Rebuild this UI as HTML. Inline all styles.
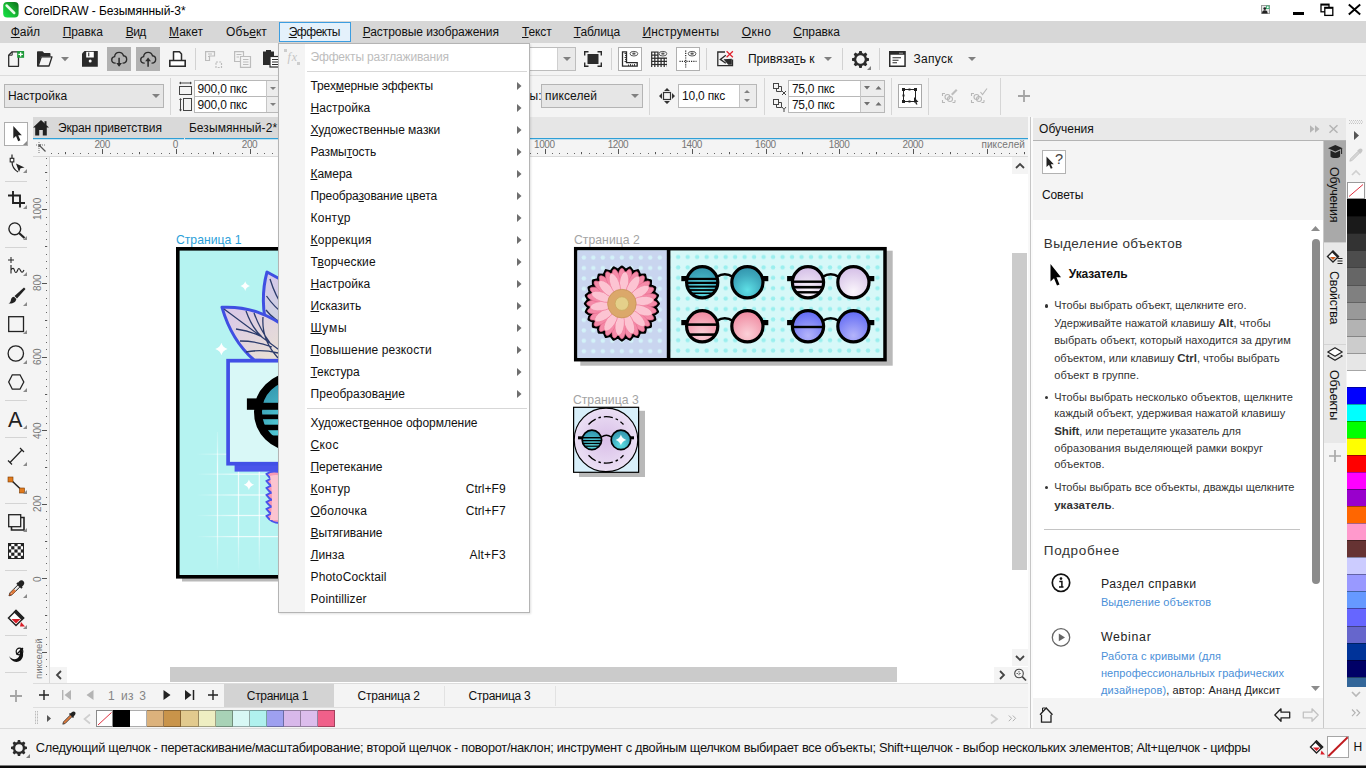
<!DOCTYPE html>
<html lang="ru">
<head>
<meta charset="utf-8">
<title>CorelDRAW - Безымянный-3*</title>
<style>
*{box-sizing:border-box;margin:0;padding:0}
html,body{width:1366px;height:768px;overflow:hidden;background:#f4f4f4}
body{position:relative;font-family:"Liberation Sans",sans-serif;font-size:12.5px;color:#111;line-height:1}
.a{position:absolute}
.t{position:absolute;white-space:nowrap;line-height:16px;height:16px}
u{text-decoration:underline;text-underline-offset:.5px;text-decoration-thickness:1px}
svg{position:absolute;overflow:visible}
.vr{font-size:10px;color:#767676;line-height:10px;height:10px;white-space:nowrap;transform-origin:0 0;transform:rotate(-90deg);text-align:left}
.vt{font-size:12.5px;color:#111;line-height:12px;height:12px;white-space:nowrap;transform-origin:0 0;transform:rotate(90deg)}
b{font-weight:bold}
</style>
</head>
<body>
<div class="a " style="left:0px;top:0px;width:1366px;height:21px;background:#ffffff;"></div>
<svg class="a" style="left:3px;top:2.3px;" width="16" height="16" viewBox="0 0 16 16"><defs><linearGradient id="lg1" x1="1" y1="0" x2="0" y2="1"><stop offset="0" stop-color="#0a6a1a"/><stop offset=".45" stop-color="#17b030"/><stop offset="1" stop-color="#12e646"/></linearGradient></defs>
<rect x=".200" y="0" width="15.400" height="15.600" rx="4" fill="url(#lg1)"/>
<path d="M3.600 3.500L11.200 11" stroke="#e4fbe6" stroke-width="2.500" stroke-linecap="round"/></svg>
<span class="t" id="t0" style="left:23.90px;top:3.00px;font-size:12px;color:#000;letter-spacing:-0.039px;">CorelDRAW - Безымянный-3*</span>
<svg class="a" style="left:1261px;top:5px;" width="9" height="9" viewBox="0 0 9 9"><rect x="0.5" y="0.5" width="8" height="8" fill="#e8e8e8" stroke="#9a9a9a" stroke-width="1"/><circle cx="3.8" cy="3.6" r="1.4" fill="#222"/><path d="M1 8.5 Q1 5.2 3.8 5.2 Q6.6 5.2 6.6 8.5Z" fill="#222"/><rect x="5.4" y="1" width="2.6" height="2.6" fill="#fff" stroke="#2fae6c" stroke-width=".8"/></svg>
<div class="a " style="left:1293px;top:12px;width:11px;height:3px;background:#000;"></div>
<svg class="a" style="left:1320px;top:3px;" width="14" height="13" viewBox="0 0 14 13"><rect x="1" y="1.2" width="8" height="7.6" fill="#fff" stroke="#000" stroke-width="1.3"/><rect x="1" y="1" width="8" height="1.6" fill="#000"/><rect x="4.8" y="4.4" width="8" height="8" fill="#fff" stroke="#000" stroke-width="1.3"/><rect x="4.8" y="4.2" width="8" height="1.6" fill="#000"/></svg>
<svg class="a" style="left:1348px;top:4px;" width="13" height="11" viewBox="0 0 13 11"><path d="M0.8 0.5 L12.2 10.5 M12.2 0.5 L0.8 10.5" stroke="#000" stroke-width="1.9" fill="none"/></svg>
<div class="a " style="left:0px;top:21px;width:1366px;height:22px;background:#d7d7d7;"></div>
<div class="a " style="left:279px;top:22px;width:72px;height:20px;background:#e4f1fb;border:1px solid #3c9de0;"></div>
<span class="t" id="t1" style="left:10.80px;top:24.00px;font-size:12px;color:#111;letter-spacing:-0.072px;"><u>Ф</u>айл</span>
<span class="t" id="t2" style="left:62.70px;top:24.00px;font-size:12px;color:#111;letter-spacing:-0.069px;"><u>П</u>равка</span>
<span class="t" id="t3" style="left:125.70px;top:24.00px;font-size:12px;color:#111;letter-spacing:-0.517px;"><u>В</u>ид</span>
<span class="t" id="t4" style="left:169.00px;top:24.00px;font-size:12px;color:#111;letter-spacing:0.029px;"><u>М</u>акет</span>
<span class="t" id="t5" style="left:226.10px;top:24.00px;font-size:12px;color:#111;letter-spacing:-0.038px;">Объ<u>е</u>кт</span>
<span class="t" id="t6" style="left:288.70px;top:24.00px;font-size:12px;color:#111;letter-spacing:-0.477px;"><u>Э</u>ффекты</span>
<span class="t" id="t7" style="left:362.70px;top:24.00px;font-size:12px;color:#111;letter-spacing:-0.067px;"><u>Р</u>астровые изображения</span>
<span class="t" id="t8" style="left:522.00px;top:24.00px;font-size:12px;color:#111;letter-spacing:-0.130px;"><u>Т</u>екст</span>
<span class="t" id="t9" style="left:573.70px;top:24.00px;font-size:12px;color:#111;letter-spacing:-0.077px;"><u>Т</u>аблица</span>
<span class="t" id="t10" style="left:642.40px;top:24.00px;font-size:12px;color:#111;letter-spacing:0.197px;"><u>И</u>нструменты</span>
<span class="t" id="t11" style="left:741.70px;top:24.00px;font-size:12px;color:#111;letter-spacing:0.465px;"><u>О</u>кно</span>
<span class="t" id="t12" style="left:793.30px;top:24.00px;font-size:12px;color:#111;letter-spacing:-0.066px;"><u>С</u>правка</span>
<div class="a " style="left:0px;top:43px;width:1366px;height:32px;background:#f4f4f4;"></div>
<div class="a " style="left:0px;top:75px;width:1366px;height:1px;background:#dcdcdc;"></div>
<div class="a " style="left:0px;top:76px;width:1366px;height:40px;background:#f4f4f4;"></div>
<div class="a " style="left:4px;top:84px;width:160px;height:24px;background:#e6e6e6;border:1px solid #b4b4b4;"></div>
<span class="t" id="t13" style="left:7.90px;top:88.00px;font-size:12px;color:#111;letter-spacing:0.028px;">Настройка</span>
<svg class="a" style="left:152px;top:94px;" width="8" height="4" viewBox="0 0 8 4"><path d="M0 0H8L4 4Z" fill="#808080"/></svg>
<div class="a " style="left:170px;top:78px;width:1px;height:37px;background:#d6d6d6;"></div>
<div class="a " style="left:194px;top:80px;width:99px;height:17px;background:#fff;border:1px solid #b8b8b8;"></div>
<div class="a " style="left:194px;top:96px;width:99px;height:17px;background:#fff;border:1px solid #b8b8b8;"></div>
<div class="a " style="left:266px;top:81px;width:26px;height:15px;background:#ececec;"></div>
<div class="a " style="left:266px;top:97px;width:26px;height:15px;background:#ececec;"></div>
<svg class="a" style="left:270px;top:87px;" width="6" height="3" viewBox="0 0 6 3"><path d="M0 0H6L3 3Z" fill="#808080"/></svg>
<svg class="a" style="left:270px;top:103px;" width="6" height="3" viewBox="0 0 6 3"><path d="M0 0H6L3 3Z" fill="#808080"/></svg>
<span class="t" id="t14" style="left:197.60px;top:81.00px;font-size:12px;color:#111;letter-spacing:-0.206px;">900,0 пкс</span>
<span class="t" id="t15" style="left:197.60px;top:97.00px;font-size:12px;color:#111;letter-spacing:-0.206px;">900,0 пкс</span>
<svg class="a" style="left:179px;top:81px;" width="14" height="33" viewBox="0 0 14 33"><g fill="none" stroke="#444" stroke-width="1"><rect x=".5" y="5.5" width="12" height="8"/><path d="M1 2H12"/><rect x="4.5" y="17.5" width="8" height="12"/><path d="M1.5 18.5V29"/></g>
<path d="M0 2l2-1.6v3.2zM13 2l-2-1.6v3.2zM1.5 17l-1.5 2h3zM1.5 30.5l-1.5-2h3z" fill="#444"/></svg>
<span class="t" id="t16" style="left:529.60px;top:88.00px;font-size:12px;color:#111;">ы:</span>
<div class="a " style="left:541px;top:84px;width:102px;height:24px;background:#e6e6e6;border:1px solid #b4b4b4;"></div>
<span class="t" id="t17" style="left:545.10px;top:88.00px;font-size:12px;color:#111;letter-spacing:0.093px;">пикселей</span>
<svg class="a" style="left:631px;top:94px;" width="8" height="4" viewBox="0 0 8 4"><path d="M0 0H8L4 4Z" fill="#808080"/></svg>
<div class="a " style="left:649px;top:78px;width:1px;height:37px;background:#d6d6d6;"></div>
<svg class="a" style="left:659px;top:88px;" width="16" height="16" viewBox="0 0 16 16"><rect x="4.5" y="4.5" width="7" height="7" fill="none" stroke="#333" stroke-width="1.2"/><path d="M8 0l3 3H5zM8 16l3-3H5zM0 8l3-3v6zM16 8l-3-3v6z" fill="#333"/></svg>
<div class="a " style="left:678px;top:84px;width:79px;height:24px;background:#fff;border:1px solid #b8b8b8;"></div>
<div class="a " style="left:739px;top:85px;width:17px;height:22px;background:#ececec;"></div>
<svg class="a" style="left:744px;top:90px;" width="6" height="12" viewBox="0 0 6 12"><path d="M0 3H6L3 0ZM0 9H6L3 12Z" fill="#808080"/></svg>
<span class="t" id="t18" style="left:681.90px;top:88.00px;font-size:12px;color:#111;letter-spacing:-0.168px;">10,0 пкс</span>
<div class="a " style="left:764px;top:78px;width:1px;height:37px;background:#d6d6d6;"></div>
<svg class="a" style="left:773px;top:82px;" width="14" height="32" viewBox="0 0 14 32"><g fill="none" stroke="#444" stroke-width="1"><rect x=".5" y="1.5" width="5" height="5"/><path d="M3.5 6.5v3h5v-5h-2.5"/><rect x=".5" y="17.5" width="5" height="5"/><path d="M3.5 22.500v3h5v-5h-2.500"/></g>
<path d="M9 9l4 4M13 9l-4 4" stroke="#444" stroke-width="1" fill="none"/><path d="M9 25l2 2.400l2-2.400M11 27.400V30" stroke="#444" stroke-width="1" fill="none"/></svg>
<div class="a " style="left:788px;top:80px;width:97px;height:17px;background:#fff;border:1px solid #b8b8b8;"></div>
<div class="a " style="left:788px;top:96px;width:97px;height:17px;background:#fff;border:1px solid #b8b8b8;"></div>
<div class="a " style="left:861px;top:81px;width:23px;height:15px;background:#ececec;"></div>
<div class="a " style="left:861px;top:97px;width:23px;height:15px;background:#ececec;"></div>
<svg class="a" style="left:864px;top:86px;" width="18" height="4" viewBox="0 0 18 4"><path d="M0 0H6L3 3.500ZM11.500 3.500H17.500L14.500 0Z" fill="#707070"/></svg>
<svg class="a" style="left:864px;top:102px;" width="18" height="4" viewBox="0 0 18 4"><path d="M0 0H6L3 3.500ZM11.500 3.500H17.500L14.500 0Z" fill="#707070"/></svg>
<span class="t" id="t19" style="left:791.90px;top:81.00px;font-size:12px;color:#111;letter-spacing:-0.240px;">75,0 пкс</span>
<span class="t" id="t20" style="left:791.90px;top:97.00px;font-size:12px;color:#111;letter-spacing:-0.240px;">75,0 пкс</span>
<div class="a " style="left:891px;top:78px;width:1px;height:37px;background:#d6d6d6;"></div>
<div class="a " style="left:898px;top:84px;width:24px;height:24px;background:#fff;border:1px solid #a8a8a8;"></div>
<svg class="a" style="left:902px;top:88px;" width="17" height="17" viewBox="0 0 17 17"><rect x="1.500" y="1.500" width="12" height="12" fill="none" stroke="#222" stroke-width="1"/><g fill="#222"><rect x="0" y="0" width="3" height="3"/><rect x="6.500" y=".500" width="2" height="2"/><rect x="12" y="0" width="3" height="3"/><rect x=".500" y="6.500" width="2" height="2"/><rect x="0" y="12" width="3" height="3"/><rect x="6.500" y="12.500" width="2" height="2"/><path d="M12 9l4.500 5h-2l1 2.500h-1.500l-1-2.500l-1 1z"/></g></svg>
<div class="a " style="left:928px;top:78px;width:1px;height:37px;background:#d6d6d6;"></div>
<svg class="a" style="left:942px;top:88px;" width="16" height="16" viewBox="0 0 16 16"><g fill="none" stroke="#b8b8b8" stroke-width="1.100"><path d="M0.500 8V5.500H3M0.500 12V14.500H3M13 14.500H10.500M13 12V14.500"/><circle cx="5.500" cy="9" r="2.500"/><circle cx="8" cy="11" r="2.500"/></g><path d="M9 6L14 1l1.500 1.500L10.500 7.500z" fill="#bdbdbd"/></svg>
<svg class="a" style="left:971px;top:88px;" width="17" height="16" viewBox="0 0 17 16"><g fill="none" stroke="#b8b8b8" stroke-width="1.100"><path d="M0.500 8V5.500H3M0.500 12V14.500H3M13 14.500H10.500M13 12V14.500"/><circle cx="5.500" cy="9" r="2.500"/><circle cx="8" cy="11" r="2.500"/><path d="M9.500 4l2 2.500L16 0.500"/></g></svg>
<div class="a " style="left:1000px;top:78px;width:1px;height:37px;background:#d6d6d6;"></div>
<svg class="a" style="left:1018px;top:90px;" width="12" height="12" viewBox="0 0 12 12"><path d="M6 0V12M0 6H12" stroke="#a4a4a4" stroke-width="1.800" fill="none"/></svg>
<div class="a " style="left:266px;top:81px;width:1px;height:31px;background:#c6c6c6;"></div>
<div class="a " style="left:860px;top:81px;width:1px;height:31px;background:#c6c6c6;"></div>
<div class="a " style="left:739px;top:85px;width:1px;height:22px;background:#c6c6c6;"></div>
<svg class="a" style="left:8px;top:51px;" width="17" height="16" viewBox="0 0 17 16"><path d="M.700 15.300V4.200L4.200 .800H10.500V15.300Z" fill="#f4f4f4" stroke="#2b2b2b" stroke-width="1.300" stroke-linejoin="round"/><path d="M.700 4.200H4.200V.800" fill="none" stroke="#2b2b2b" stroke-width="1"/><rect x="9.200" y="0" width="6.900" height="6.800" fill="#1f9a3a"/><path d="M12.650 1.200v4.400M10.400 3.400h4.500" stroke="#fff" stroke-width="1.300"/></svg>
<svg class="a" style="left:37px;top:51px;" width="16" height="16" viewBox="0 0 16 16"><path d="M0 15.600V1.200C0 .600 .400 .200 1 .200H5.500L7.200 2H12.500C13.100 2 13.500 2.400 13.500 3V5.500H4L1 15.600Z" fill="#2b2b2b"/><path d="M1.200 15L4.300 5.800H15L12 15Z" fill="#f4f4f4" stroke="#2b2b2b" stroke-width="1.300" stroke-linejoin="round"/></svg>
<svg class="a" style="left:61px;top:57px;" width="8" height="4" viewBox="0 0 8 4"><path d="M0 0H8L4 4.200Z" fill="#808080"/></svg>
<svg class="a" style="left:82px;top:51px;" width="16" height="16" viewBox="0 0 16 16"><path d="M2.500 0H15.800V15.700H0V2.500Z" fill="#2b2b2b"/><rect x="4.200" y=".800" width="7.600" height="5.700" fill="#fff"/><rect x="6.200" y="1.500" width="1.100" height="3.800" fill="#2b2b2b"/><circle cx="8.200" cy="9.900" r="1.500" fill="#fff"/></svg>
<div class="a " style="left:107px;top:47px;width:24px;height:24px;background:#b2b2b2;"></div>
<div class="a " style="left:136px;top:47px;width:24px;height:24px;background:#b2b2b2;"></div>
<svg class="a" style="left:110.8px;top:51px;" width="18" height="18" viewBox="0 0 18 18"><g transform="scale(.9)"><path d="M5.200 13.500H4.600C2.400 13.500 .800 11.900 .800 9.900C.800 8 2.200 6.500 4 6.300C4.300 3.400 6.400 1.500 9 1.500C11.400 1.500 13.300 3 13.900 5.300C16 5.500 17.400 7.200 17.400 9.300C17.400 11.600 15.700 13.500 13.300 13.500H12.800" fill="none" stroke="#2b2b2b" stroke-width="1.500"/><path d="M9 7.500V16" stroke="#2b2b2b" stroke-width="1.700"/><path d="M5.800 13.300L9 17.500L12.200 13.300Z" fill="#2b2b2b"/></g></svg>
<svg class="a" style="left:139.8px;top:51px;" width="18" height="18" viewBox="0 0 18 18"><g transform="scale(.9)"><path d="M5.200 13.500H4.600C2.400 13.500 .800 11.900 .800 9.900C.800 8 2.200 6.500 4 6.300C4.300 3.400 6.400 1.500 9 1.500C11.400 1.500 13.300 3 13.900 5.300C16 5.500 17.400 7.200 17.400 9.300C17.400 11.600 15.700 13.500 13.300 13.500H12.800" fill="none" stroke="#2b2b2b" stroke-width="1.500"/><path d="M9 17.500V9.500" stroke="#2b2b2b" stroke-width="1.700"/><path d="M5.800 11.500L9 7.300L12.200 11.500Z" fill="#2b2b2b"/></g></svg>
<svg class="a" style="left:169px;top:51px;" width="17" height="16" viewBox="0 0 17 16"><path d="M4.500 9.500V.800H10.500L12.500 3V9.500" fill="#fff" stroke="#2b2b2b" stroke-width="1.500" stroke-linejoin="round"/><path d="M.800 9.500H16.200V15.200H.800Z" fill="#fff" stroke="#2b2b2b" stroke-width="1.600"/></svg>
<div class="a " style="left:195px;top:48px;width:1px;height:22px;background:#d2d2d2;"></div>
<svg class="a" style="left:205px;top:51px;" width="18" height="17" viewBox="0 0 18 17"><g fill="none" stroke="#bcbcbc" stroke-width="1.200"><path d="M.600 9.500V.600H9.500V5H4.500V9.500Z"/><path d="M3 3H7M3 5.500H4.500"/><path d="M11 11H16.500V16.500H11Z" stroke-dasharray="2 1.200"/></g></svg>
<svg class="a" style="left:234px;top:51px;" width="18" height="17" viewBox="0 0 18 17"><g fill="#f4f4f4" stroke="#bcbcbc" stroke-width="1.200"><path d="M.600 .600H9.500V10.500H.600Z"/><path d="M6.500 5.500H16.500V16.400H6.500Z"/></g><path d="M2.500 3.500H7.500M2.500 6H5M9 8.500H14.500M9 11H14.500M9 13.500H14.500" stroke="#bcbcbc" stroke-width="1.100"/></svg>
<svg class="a" style="left:263px;top:50px;" width="18" height="18" viewBox="0 0 18 18"><rect x="0" y="1.500" width="11" height="13.500" fill="#2b2b2b"/><rect x="3" y="0" width="5" height="3" fill="#2b2b2b"/><rect x="7" y="6.500" width="10" height="10.500" fill="#fff" stroke="#2b2b2b" stroke-width="1.200"/><path d="M9 9.500H15M9 12H15M9 14.500H15" stroke="#2b2b2b" stroke-width="1.200"/></svg>
<div class="a " style="left:480px;top:47px;width:96px;height:24px;background:#fff;border:1px solid #bdbdbd;"></div>
<div class="a " style="left:558px;top:48px;width:17px;height:22px;background:#e9e9e9;"></div>
<div class="a " style="left:557px;top:48px;width:1px;height:22px;background:#cfcfcf;"></div>
<svg class="a" style="left:563px;top:57px;" width="8" height="4" viewBox="0 0 8 4"><path d="M0 0H8L4 4Z" fill="#808080"/></svg>
<svg class="a" style="left:584px;top:51px;" width="18" height="16" viewBox="0 0 18 16"><rect x="3.500" y="3" width="11" height="10" fill="#2b2b2b"/><path d="M.700 4.500V.700H4.500M13.500 .700H17.300V4.500M17.300 11.500V15.300H13.500M4.500 15.300H.700V11.500" fill="none" stroke="#2b2b2b" stroke-width="1.400"/></svg>
<div class="a " style="left:611px;top:48px;width:1px;height:22px;background:#d2d2d2;"></div>
<div class="a " style="left:618px;top:47px;width:24px;height:24px;background:#fff;border:1px solid #b0b0b0;"></div>
<svg class="a" style="left:0px;top:0px;" width="1366" height="768" viewBox="0 0 1366 768"><path d="M622.500 51.800H626.500V62.700H637.200V66.200H622.500Z" fill="#fff" stroke="#2b2b2b" stroke-width="1.300"/><path d="M624.500 53.500H626.500M625 55.500H626.500M624.500 57.500H626.500M625 59.500H626.500M624.500 61.500H626.500M628.500 66V64.500M630.500 66V64M632.500 66V64.500M634.500 66V64" stroke="#2b2b2b" stroke-width=".900" fill="none"/><ellipse cx="633.9" cy="53.7" rx="3.900" ry="2.300" fill="#fff" stroke="#5a5a5a" stroke-width="1"/><ellipse cx="633.9" cy="53.7" rx="1.700" ry="1.100" fill="#5a5a5a"/></svg>
<svg class="a" style="left:0px;top:0px;" width="1366" height="768" viewBox="0 0 1366 768"><path d="M651.100 51.400H658.600V57.600H667V67H651.100Z" fill="#2b2b2b"/><rect x="652.30" y="52.60" width="1.900" height="1.900" fill="#fff"/><rect x="655.43" y="52.60" width="1.900" height="1.900" fill="#fff"/><rect x="652.30" y="55.73" width="1.900" height="1.900" fill="#fff"/><rect x="655.43" y="55.73" width="1.900" height="1.900" fill="#fff"/><rect x="652.30" y="58.86" width="1.900" height="1.900" fill="#fff"/><rect x="655.43" y="58.86" width="1.900" height="1.900" fill="#fff"/><rect x="658.56" y="58.86" width="1.900" height="1.900" fill="#fff"/><rect x="661.69" y="58.86" width="1.900" height="1.900" fill="#fff"/><rect x="664.82" y="58.86" width="1.900" height="1.900" fill="#fff"/><rect x="652.30" y="61.99" width="1.900" height="1.900" fill="#fff"/><rect x="655.43" y="61.99" width="1.900" height="1.900" fill="#fff"/><rect x="658.56" y="61.99" width="1.900" height="1.900" fill="#fff"/><rect x="661.69" y="61.99" width="1.900" height="1.900" fill="#fff"/><rect x="664.82" y="61.99" width="1.900" height="1.900" fill="#fff"/><rect x="652.30" y="65.12" width="1.900" height="1.900" fill="#fff"/><rect x="655.43" y="65.12" width="1.900" height="1.900" fill="#fff"/><rect x="658.56" y="65.12" width="1.900" height="1.900" fill="#fff"/><rect x="661.69" y="65.12" width="1.900" height="1.900" fill="#fff"/><rect x="664.82" y="65.12" width="1.900" height="1.900" fill="#fff"/><ellipse cx="662.9" cy="53.7" rx="3.900" ry="2.300" fill="#f4f4f4" stroke="#5a5a5a" stroke-width="1"/><ellipse cx="662.9" cy="53.7" rx="1.700" ry="1.100" fill="#5a5a5a"/></svg>
<div class="a " style="left:676px;top:47px;width:24px;height:24px;background:#fff;border:1px solid #b0b0b0;"></div>
<svg class="a" style="left:0px;top:0px;" width="1366" height="768" viewBox="0 0 1366 768"><path d="M685.700 50.500V67.500M679.500 61.400H696.500" stroke="#2b2b2b" stroke-width="1.200" stroke-dasharray="1.200 1.100" fill="none"/><ellipse cx="692.1" cy="53.7" rx="3.900" ry="2.300" fill="#fff" stroke="#5a5a5a" stroke-width="1"/><ellipse cx="692.1" cy="53.7" rx="1.700" ry="1.100" fill="#5a5a5a"/></svg>
<div class="a " style="left:706px;top:48px;width:1px;height:22px;background:#d2d2d2;"></div>
<svg class="a" style="left:0px;top:0px;" width="1366" height="768" viewBox="0 0 1366 768"><path d="M725 52H717.800V65.700H732.500V59.500" fill="none" stroke="#2b2b2b" stroke-width="1.300"/><path d="M725.800 55.300L720.300 59.400L725.800 63.300" fill="none" stroke="#2b2b2b" stroke-width="1.300"/><path d="M723.500 59.200L731.800 58.800V64.800H728.300Z" fill="#2b2b2b"/><path d="M726.600 51.200L732.900 57.300M732.900 51.200L726.600 57.300" stroke="#e0202c" stroke-width="1.200"/></svg>
<span class="t" id="t21" style="left:747.90px;top:51.00px;font-size:12px;color:#111;letter-spacing:-0.040px;">Привяза<u>т</u>ь к</span>
<svg class="a" style="left:824px;top:57px;" width="8" height="4" viewBox="0 0 8 4"><path d="M0 0H8L4 4Z" fill="#808080"/></svg>
<div class="a " style="left:842px;top:48px;width:1px;height:22px;background:#d2d2d2;"></div>
<svg class="a" style="left:852px;top:50.5px;" width="17" height="17" viewBox="0 0 17 17"><path d="M7.300 0H9.700L10.200 2.100L11.700 2.700L13.500 1.600L15.300 3.300L14.200 5.200L14.800 6.700L17 7.200V9.700L14.800 10.200L14.200 11.700L15.300 13.600L13.500 15.300L11.700 14.200L10.200 14.800L9.700 17H7.300L6.800 14.800L5.300 14.200L3.500 15.300L1.700 13.600L2.800 11.700L2.200 10.200L0 9.700V7.200L2.200 6.700L2.800 5.200L1.700 3.300L3.500 1.600L5.300 2.700L6.800 2.100Z" fill="#2b2b2b"/><circle cx="8.500" cy="8.500" r="4.200" fill="#f4f4f4"/></svg>
<svg class="a" style="left:867px;top:66px;" width="4" height="4" viewBox="0 0 4 4"><path d="M4 0V4H0Z" fill="#808080"/></svg>
<div class="a " style="left:879px;top:48px;width:1px;height:22px;background:#d2d2d2;"></div>
<svg class="a" style="left:889px;top:51px;" width="17" height="16" viewBox="0 0 17 16"><rect x=".750" y=".750" width="15.300" height="14.500" fill="#fff" stroke="#2b2b2b" stroke-width="1.500"/><rect x=".750" y=".750" width="15.300" height="3" fill="#2b2b2b"/><path d="M10.500 2.200H11.500M12.500 2.200H13.500" stroke="#fff" stroke-width="1"/><path d="M3.500 6.800H12M3.500 9.300H9.500M3.500 11.800H8" stroke="#2b2b2b" stroke-width="1.100"/></svg>
<span class="t" id="t22" style="left:913.40px;top:51.00px;font-size:12px;color:#111;letter-spacing:0.331px;">Запуск</span>
<svg class="a" style="left:968px;top:57px;" width="8" height="4" viewBox="0 0 8 4"><path d="M0 0H8L4 4Z" fill="#808080"/></svg>
<div class="a " style="left:0px;top:116px;width:33px;height:613px;background:#f4f4f4;"></div>
<div class="a " style="left:4px;top:122px;width:24px;height:24px;background:#fff;border:1px solid #adadad;"></div>
<svg class="a" style="left:13px;top:126px;" width="9" height="16" viewBox="0 0 9 16"><path d="M0.300 0V12.500L3 10L5.200 15.300L7.400 14.300L5.200 9.200H8.800Z" fill="#222"/></svg>
<svg class="a" style="left:23px;top:141px;" width="4" height="4" viewBox="0 0 4 4"><path d="M4 0V4H0Z" fill="#8a8a8a"/></svg>
<svg class="a" style="left:9px;top:154px;" width="17" height="19" viewBox="0 0 17 19"><path d="M3 0.500V4.500M3 7.500C3 13 6.500 16.500 9 18" fill="none" stroke="#222" stroke-width="1.200"/><rect x="1.200" y="4.300" width="3.600" height="3.600" fill="#fff" stroke="#222" stroke-width="1.100"/><path d="M7 9.500L15.500 13.500L11.500 14.300L10 18Z" fill="#222"/></svg>
<svg class="a" style="left:23px;top:169px;" width="4" height="4" viewBox="0 0 4 4"><path d="M4 0V4H0Z" fill="#8a8a8a"/></svg>
<div class="a " style="left:5px;top:181px;width:22px;height:1px;background:#d4d4d4;"></div>
<svg class="a" style="left:8px;top:191px;" width="17" height="17" viewBox="0 0 17 17"><path d="M5 0V12H17M0 4.500H12V16.500" fill="none" stroke="#222" stroke-width="1.900"/></svg>
<svg class="a" style="left:23px;top:205px;" width="4" height="4" viewBox="0 0 4 4"><path d="M4 0V4H0Z" fill="#8a8a8a"/></svg>
<svg class="a" style="left:8px;top:222px;" width="18" height="17" viewBox="0 0 18 17"><circle cx="6.800" cy="6.800" r="5.900" fill="none" stroke="#222" stroke-width="1.400"/><path d="M11 11L16.500 16" stroke="#222" stroke-width="2.200"/></svg>
<svg class="a" style="left:23px;top:236px;" width="4" height="4" viewBox="0 0 4 4"><path d="M4 0V4H0Z" fill="#8a8a8a"/></svg>
<div class="a " style="left:5px;top:247px;width:22px;height:1px;background:#d4d4d4;"></div>
<svg class="a" style="left:8px;top:257px;" width="18" height="18" viewBox="0 0 18 18"><path d="M3 0V6M0 3H6" stroke="#222" stroke-width="1"/><path d="M3 8V16.500M3 13C4.500 10.500 6 11 6.500 13.500S8.500 16.500 9.500 13.500S11.500 11 12.500 13.500S14.500 16 16 13" fill="none" stroke="#222" stroke-width="1.100"/></svg>
<svg class="a" style="left:23px;top:272px;" width="4" height="4" viewBox="0 0 4 4"><path d="M4 0V4H0Z" fill="#8a8a8a"/></svg>
<svg class="a" style="left:8px;top:287px;" width="18" height="18" viewBox="0 0 18 18"><path d="M16 0.500L17.500 2L9 11.500L6.500 9Z" fill="#222"/><path d="M6 9.800L8.300 12C8 15 5 17 0.500 16.500C2.500 15.500 2.800 14 3 12.500C3.300 11 4.500 10 6 9.800Z" fill="#222"/></svg>
<svg class="a" style="left:23px;top:302px;" width="4" height="4" viewBox="0 0 4 4"><path d="M4 0V4H0Z" fill="#8a8a8a"/></svg>
<svg class="a" style="left:8px;top:316px;" width="17" height="17" viewBox="0 0 17 17"><rect x=".700" y=".700" width="14.800" height="14.800" fill="none" stroke="#222" stroke-width="1.300"/></svg>
<svg class="a" style="left:23px;top:330px;" width="4" height="4" viewBox="0 0 4 4"><path d="M4 0V4H0Z" fill="#8a8a8a"/></svg>
<svg class="a" style="left:7px;top:345px;" width="18" height="18" viewBox="0 0 18 18"><circle cx="8.800" cy="8.500" r="7.700" fill="none" stroke="#222" stroke-width="1.300"/></svg>
<svg class="a" style="left:23px;top:360px;" width="4" height="4" viewBox="0 0 4 4"><path d="M4 0V4H0Z" fill="#8a8a8a"/></svg>
<svg class="a" style="left:8px;top:374px;" width="17" height="17" viewBox="0 0 17 17"><path d="M4.300 .800H12L15.800 8L12 15.200H4.300L.700 8Z" fill="none" stroke="#222" stroke-width="1.300"/></svg>
<svg class="a" style="left:23px;top:388px;" width="4" height="4" viewBox="0 0 4 4"><path d="M4 0V4H0Z" fill="#8a8a8a"/></svg>
<div class="a " style="left:5px;top:400px;width:22px;height:1px;background:#d4d4d4;"></div>
<span class="t" id="t23" style="left:7.90px;top:412.00px;font-size:21.5px;color:#222;">A</span>
<svg class="a" style="left:23px;top:425px;" width="4" height="4" viewBox="0 0 4 4"><path d="M4 0V4H0Z" fill="#8a8a8a"/></svg>
<div class="a " style="left:5px;top:437px;width:22px;height:1px;background:#d4d4d4;"></div>
<svg class="a" style="left:8px;top:448px;" width="17" height="16" viewBox="0 0 17 16"><path d="M2 14.500L14 2M0 12.500L4 16.500M12 0L16 4" stroke="#222" stroke-width="1.200" fill="none"/></svg>
<svg class="a" style="left:23px;top:462px;" width="4" height="4" viewBox="0 0 4 4"><path d="M4 0V4H0Z" fill="#8a8a8a"/></svg>
<svg class="a" style="left:8px;top:477px;" width="18" height="17" viewBox="0 0 18 17"><path d="M2.500 2.500L13.500 13" stroke="#222" stroke-width="1.500"/><rect x="0" y="0" width="5" height="5" fill="#e07a1c" stroke="#7a3a00" stroke-width=".600"/><rect x="11.500" y="11" width="5" height="5" fill="#e07a1c" stroke="#7a3a00" stroke-width=".600"/></svg>
<svg class="a" style="left:23px;top:490px;" width="4" height="4" viewBox="0 0 4 4"><path d="M4 0V4H0Z" fill="#8a8a8a"/></svg>
<div class="a " style="left:5px;top:503px;width:22px;height:1px;background:#d4d4d4;"></div>
<svg class="a" style="left:8px;top:514px;" width="17" height="17" viewBox="0 0 17 17"><path d="M3.500 13V16H16V3.500H13" fill="none" stroke="#222" stroke-width="1.600"/><rect x=".700" y=".700" width="12" height="12" fill="#f4f4f4" stroke="#222" stroke-width="1.300"/></svg>
<svg class="a" style="left:23px;top:528px;" width="4" height="4" viewBox="0 0 4 4"><path d="M4 0V4H0Z" fill="#8a8a8a"/></svg>
<svg class="a" style="left:8px;top:543px;" width="16" height="16" viewBox="0 0 16 16"><rect width="16" height="16" fill="#fff"/><rect x="0.0" y="0.0" width="3.200" height="3.200" fill="#222"/><rect x="6.4" y="0.0" width="3.200" height="3.200" fill="#222"/><rect x="12.8" y="0.0" width="3.200" height="3.200" fill="#222"/><rect x="3.2" y="3.2" width="3.200" height="3.200" fill="#222"/><rect x="9.6" y="3.2" width="3.200" height="3.200" fill="#222"/><rect x="0.0" y="6.4" width="3.200" height="3.200" fill="#222"/><rect x="6.4" y="6.4" width="3.200" height="3.200" fill="#222"/><rect x="12.8" y="6.4" width="3.200" height="3.200" fill="#222"/><rect x="3.2" y="9.6" width="3.200" height="3.200" fill="#222"/><rect x="9.6" y="9.6" width="3.200" height="3.200" fill="#222"/><rect x="0.0" y="12.8" width="3.200" height="3.200" fill="#222"/><rect x="6.4" y="12.8" width="3.200" height="3.200" fill="#222"/><rect x="12.8" y="12.8" width="3.200" height="3.200" fill="#222"/><rect x=".500" y=".500" width="15" height="15" fill="none" stroke="#222" stroke-width="1"/></svg>
<div class="a " style="left:5px;top:570px;width:22px;height:1px;background:#d4d4d4;"></div>
<svg class="a" style="left:8px;top:580px;" width="17" height="17" viewBox="0 0 17 17"><path d="M11 1.500C12.500 0 14.500 0 15.500 1.200C16.700 2.500 16.500 4.200 15 5.700L13.300 7.300L9.500 3.500Z" fill="#222"/><path d="M9 3L14 8" stroke="#222" stroke-width="2"/><path d="M9.800 5L2 12.800L1 15.800L4 14.800L11.800 7Z" fill="#e8e8e8" stroke="#222" stroke-width="1"/><path d="M1 15.800L4 14.800L2 12.800Z" fill="#d0581a"/><path d="M2.500 12.500L6 9L8 11L4.500 14.500Z" fill="#e07a3a"/></svg>
<svg class="a" style="left:23px;top:594px;" width="4" height="4" viewBox="0 0 4 4"><path d="M4 0V4H0Z" fill="#8a8a8a"/></svg>
<svg class="a" style="left:7px;top:609px;" width="19" height="19" viewBox="0 0 19 19"><path d="M9 1.500L16.500 9L9 16.500L1.500 9Z" fill="#fff" stroke="#222" stroke-width="1.500"/><path d="M9 .500L17.500 9L15 11.500L6.500 3Z" fill="#222"/><path d="M4.500 10H13.500L9 14.500Z" fill="#d81e28"/><path d="M14 13L18 17.500H13Z" fill="#d81e28"/></svg>
<svg class="a" style="left:23px;top:625px;" width="4" height="4" viewBox="0 0 4 4"><path d="M4 0V4H0Z" fill="#8a8a8a"/></svg>
<div class="a " style="left:5px;top:635px;width:22px;height:1px;background:#d4d4d4;"></div>
<svg class="a" style="left:8px;top:645px;" width="18" height="18" viewBox="0 0 18 18"><path d="M1 11C4 15.500 10 15 11.500 10.500C12.300 8 11 6 12.500 3.500C15.500 6.500 16.500 12 12.500 15.500C8.500 18.500 3 16.500 1 11Z" fill="#111"/><circle cx="11.500" cy="6.500" r="3.300" fill="none" stroke="#111" stroke-width="1.200"/><path d="M8.500 9.500L15 3" stroke="#111" stroke-width="1.300"/></svg>
<div class="a " style="left:5px;top:672px;width:22px;height:1px;background:#d4d4d4;"></div>
<svg class="a" style="left:10px;top:690px;" width="12" height="12" viewBox="0 0 12 12"><path d="M6 0V12M0 6H12" stroke="#a4a4a4" stroke-width="1.800" fill="none"/></svg>
<div class="a " style="left:33px;top:117px;width:995px;height:21px;background:#e6e6e6;"></div>
<div class="a " style="left:33px;top:117px;width:258px;height:21px;background:#d9d9d9;"></div>
<div class="a " style="left:33px;top:138px;width:995px;height:1px;background:#2f9fd6;"></div>
<div class="a " style="left:33px;top:139px;width:995px;height:1px;background:#bfe0f0;"></div>
<div class="a " style="left:184px;top:138px;width:1px;height:2px;background:#e8e8e8;"></div>
<svg class="a" style="left:33px;top:120px;" width="16" height="16" viewBox="0 0 16 16"><path d="M8 0L16 7.500H13.800V15.500H9.800V10H6.200V15.500H2.200V7.500H0Z" fill="#222"/><rect x="11.500" y="1.200" width="2" height="4" fill="#222"/></svg>
<span class="t" id="t24" style="left:57.90px;top:120.00px;font-size:12px;color:#111;letter-spacing:-0.126px;">Экран приветствия</span>
<span class="t" id="t25" style="left:188.90px;top:120.00px;font-size:12px;color:#111;letter-spacing:0.092px;">Безымянный-2*</span>
<div class="a " style="left:33px;top:140px;width:995px;height:16px;background:#f4f4f4;"></div>
<div class="a " style="left:33px;top:156px;width:995px;height:1px;background:#d9d9d9;"></div>
<div class="a " style="left:33px;top:157px;width:16px;height:526px;background:#f4f4f4;"></div>
<div class="a " style="left:49px;top:157px;width:1px;height:526px;background:#d9d9d9;"></div>
<div class="a" id="canvas" style="left:50px;top:157px;width:962px;height:510px;background:#fff;overflow:hidden">
<svg class="a" style="left:0;top:0" width="962" height="510" viewBox="50 157 962 510"><defs>
<linearGradient id="leafg" x1="0" y1="0" x2="1" y2="1"><stop offset="0" stop-color="#d9c6ea"/><stop offset="1" stop-color="#ece6cf"/></linearGradient>
<linearGradient id="leafg2" x1="0" y1="0" x2="0" y2="1"><stop offset="0" stop-color="#d6c8ea"/><stop offset="1" stop-color="#c9d6dc"/></linearGradient>
<radialGradient id="teal" cx=".5" cy=".75" r=".8"><stop offset="0" stop-color="#5ee0e6"/><stop offset=".6" stop-color="#3fa9bd"/><stop offset="1" stop-color="#2f8fa8"/></radialGradient>
<radialGradient id="lav" cx=".5" cy=".8" r=".8"><stop offset="0" stop-color="#fbf6fc"/><stop offset="1" stop-color="#d3bde6"/></radialGradient>
<radialGradient id="pink" cx=".5" cy=".75" r=".8"><stop offset="0" stop-color="#fbd0d8"/><stop offset="1" stop-color="#ee829a"/></radialGradient>
<radialGradient id="blu" cx=".5" cy=".8" r=".8"><stop offset="0" stop-color="#b4b4fa"/><stop offset="1" stop-color="#5f68f4"/></radialGradient>
<radialGradient id="p3g" cx=".5" cy=".5" r=".5"><stop offset="0" stop-color="#d9bfe8"/><stop offset="1" stop-color="#ebdff4"/></radialGradient>
<pattern id="dotsA" x="579.1" y="252.4" width="9.49" height="10.4" patternUnits="userSpaceOnUse"><circle cx="4.745" cy="5.200" r="2.200" fill="#d3f2f8"/></pattern>
<pattern id="dotsB" x="673.450" y="251.800" width="9.49" height="10.4" patternUnits="userSpaceOnUse"><circle cx="4.745" cy="5.200" r="2.200" fill="#9aefee"/></pattern>
<linearGradient id="gridfade" x1="0" y1="0" x2="1" y2="0"><stop offset="0" stop-color="#fff" stop-opacity="0"/><stop offset=".35" stop-color="#fff" stop-opacity=".75"/><stop offset="1" stop-color="#fff" stop-opacity=".8"/></linearGradient>
<linearGradient id="gridfadev" x1="0" y1="0" x2="0" y2="1"><stop offset="0" stop-color="#fff" stop-opacity=".15"/><stop offset=".25" stop-color="#fff" stop-opacity=".8"/><stop offset=".7" stop-color="#fff" stop-opacity=".7"/><stop offset="1" stop-color="#fff" stop-opacity="0"/></linearGradient>
<clipPath id="lensL1"><circle cx="702.2" cy="282.3" r="15"/></clipPath>
<clipPath id="lensL2"><circle cx="808" cy="282.3" r="15"/></clipPath>
<clipPath id="lensL3"><circle cx="702.2" cy="326.3" r="15"/></clipPath>
<clipPath id="lensL4"><circle cx="808" cy="326.3" r="15"/></clipPath>
<clipPath id="lensP3"><circle cx="591.9" cy="439.9" r="9.500"/></clipPath>
<clipPath id="lensP1"><circle cx="293" cy="412" r="36"/></clipPath>
<clipPath id="pg1"><rect x="179.500" y="250.500" width="326" height="325"/></clipPath>
</defs><rect x="182" y="251" width="332" height="330.500" fill="#b9b9b9"/><rect x="177.800" y="248.800" width="328.500" height="328" fill="#b5f3f1" stroke="#000" stroke-width="3.600"/><g clip-path="url(#pg1)"><rect x="216.9" y="432" width="1.200" height="140" fill="url(#gridfadev)"/><rect x="237.9" y="432" width="1.200" height="140" fill="url(#gridfadev)"/><rect x="258.7" y="432" width="1.200" height="140" fill="url(#gridfadev)"/><rect x="279.4" y="432" width="1.200" height="140" fill="url(#gridfadev)"/><rect x="196" y="453.59999999999997" width="120" height="1.200" fill="url(#gridfade)"/><rect x="196" y="473.59999999999997" width="120" height="1.200" fill="url(#gridfade)"/><rect x="196" y="494.4" width="120" height="1.200" fill="url(#gridfade)"/><rect x="196" y="514.9" width="120" height="1.200" fill="url(#gridfade)"/><rect x="196" y="536.0" width="120" height="1.200" fill="url(#gridfade)"/><path d="M267 272C262 290 262 312 268 330L300 345L300 290Z" fill="url(#leafg2)" stroke="#3f4fe2" stroke-width="3" stroke-linejoin="round"/><path d="M270 279C274 292 278 300 284 308M266.500 296C272 304 278 310 286 316M266 310C272 318 278 322 288 326M266.500 322C272 326 278 328 286 330" fill="none" stroke="#2c3c6c" stroke-width="1.300"/><path d="M222 307.300C248 306 268 314 290 330L300 362L254 360C238 346 228 328 222 307.300Z" fill="url(#leafg)" stroke="#3f4fe2" stroke-width="3" stroke-linejoin="round"/><path d="M224 309L282 352M246 311C250 322 254 330 262 337M254 313C258 324 262 332 270 343M236 329C244 330 252 332 260 336M240 341C250 341 262 343 272 347M246 352C256 350 266 350 278 353M263 317C262 330 266 345 278 358" fill="none" stroke="#2c3c6c" stroke-width="1.300"/><rect x="234.600" y="366" width="120" height="105.600" fill="#4a54ea"/><rect x="228.100" y="360.700" width="120" height="103" fill="#d9f8f7" stroke="#4250e6" stroke-width="3.700"/><rect x="246.900" y="398.400" width="14" height="11.400" fill="#000"/><circle cx="293" cy="412" r="36" fill="url(#teal)"/><g clip-path="url(#lensP1)" fill="#000"><rect x="250" y="402.800" width="60" height="7"/><rect x="250" y="414.500" width="60" height="4.700"/><rect x="250" y="424.700" width="60" height="5.500"/><rect x="250" y="435.500" width="60" height="4.500"/></g><circle cx="293" cy="412" r="35" fill="none" stroke="#000" stroke-width="8"/><path d="M266.500 474Q272 469.5 282 473L282 481Q272 482 266.500 474Z" fill="#f79ab4" stroke="#4a54ea" stroke-width="2"/><path d="M266.500 481Q272 476.5 282 480L282 488Q272 489 266.500 481Z" fill="#f79ab4" stroke="#4a54ea" stroke-width="2"/><path d="M266.500 488Q272 483.5 282 487L282 495Q272 496 266.500 488Z" fill="#f79ab4" stroke="#4a54ea" stroke-width="2"/><path d="M266.500 495Q272 490.5 282 494L282 502Q272 503 266.500 495Z" fill="#f79ab4" stroke="#4a54ea" stroke-width="2"/><path d="M266.500 502Q272 497.5 282 501L282 509Q272 510 266.500 502Z" fill="#f79ab4" stroke="#4a54ea" stroke-width="2"/><path d="M266.500 509Q272 504.5 282 508L282 516Q272 517 266.500 509Z" fill="#f79ab4" stroke="#4a54ea" stroke-width="2"/><path d="M266.500 516Q272 511.5 282 515L282 523Q272 524 266.500 516Z" fill="#f79ab4" stroke="#4a54ea" stroke-width="2"/><path d="M270 476Q276 474 282 476V520H270Q274 500 270 476Z" fill="#fbc4d0"/><path d="M245.2 281.3Q246.256 285.04400000000004 250.0 286.1Q246.256 287.156 245.2 290.90000000000003Q244.14399999999998 287.156 240.39999999999998 286.1Q244.14399999999998 285.04400000000004 245.2 281.3Z" fill="#fff"/><path d="M221.4 342.8Q222.764 347.636 227.6 349Q222.764 350.364 221.4 355.2Q220.036 350.364 215.20000000000002 349Q220.036 347.636 221.4 342.8Z" fill="#fff"/><path d="M248.9 479.6Q250.044 483.656 254.1 484.8Q250.044 485.944 248.9 490.0Q247.756 485.944 243.70000000000002 484.8Q247.756 483.656 248.9 479.6Z" fill="#fff"/></g><rect x="580.300" y="250.700" width="312.400" height="115" fill="#b9b9b9"/><rect x="575.700" y="248.700" width="309.300" height="111" fill="#d6f8f8" stroke="#000" stroke-width="3.500"/><rect x="577.400" y="250.400" width="90" height="107.500" fill="#c9d5ef"/><rect x="577.400" y="250.400" width="90" height="107.500" fill="url(#dotsA)"/><rect x="670.300" y="250.400" width="213" height="107.500" fill="url(#dotsB)"/><rect x="666.800" y="247" width="3.600" height="114" fill="#000"/><polygon points="658.50,303.60 655.29,307.36 657.58,311.74 653.61,314.70 654.88,319.48 650.35,321.48 650.52,326.42 645.66,327.36 644.72,332.22 639.78,332.05 637.78,336.58 633.00,335.31 630.04,339.28 625.66,336.99 621.90,340.20 618.14,336.99 613.76,339.28 610.80,335.31 606.02,336.58 604.02,332.05 599.08,332.22 598.14,327.36 593.28,326.42 593.45,321.48 588.92,319.48 590.19,314.70 586.22,311.74 588.51,307.36 585.30,303.60 588.51,299.84 586.22,295.46 590.19,292.50 588.92,287.72 593.45,285.72 593.28,280.78 598.14,279.84 599.08,274.98 604.02,275.15 606.02,270.62 610.80,271.89 613.76,267.92 618.14,270.21 621.90,267.00 625.66,270.21 630.04,267.92 633.00,271.89 637.78,270.62 639.78,275.15 644.72,274.98 645.66,279.84 650.52,280.78 650.35,285.72 654.88,287.72 653.61,292.50 657.58,295.46 655.29,299.84" fill="#000" stroke="#000" stroke-width="3" stroke-linejoin="round"/><ellipse cx="621.9" cy="279.6" rx="3.900" ry="11.300" fill="#f58aa8" stroke="#e96a8e" stroke-width=".600" transform="rotate(0.00 621.9 303.6)"/><ellipse cx="621.9" cy="279.6" rx="3.900" ry="11.300" fill="#f58aa8" stroke="#e96a8e" stroke-width=".600" transform="rotate(12.86 621.9 303.6)"/><ellipse cx="621.9" cy="279.6" rx="3.900" ry="11.300" fill="#f58aa8" stroke="#e96a8e" stroke-width=".600" transform="rotate(25.71 621.9 303.6)"/><ellipse cx="621.9" cy="279.6" rx="3.900" ry="11.300" fill="#f58aa8" stroke="#e96a8e" stroke-width=".600" transform="rotate(38.57 621.9 303.6)"/><ellipse cx="621.9" cy="279.6" rx="3.900" ry="11.300" fill="#f58aa8" stroke="#e96a8e" stroke-width=".600" transform="rotate(51.43 621.9 303.6)"/><ellipse cx="621.9" cy="279.6" rx="3.900" ry="11.300" fill="#f58aa8" stroke="#e96a8e" stroke-width=".600" transform="rotate(64.29 621.9 303.6)"/><ellipse cx="621.9" cy="279.6" rx="3.900" ry="11.300" fill="#f58aa8" stroke="#e96a8e" stroke-width=".600" transform="rotate(77.14 621.9 303.6)"/><ellipse cx="621.9" cy="279.6" rx="3.900" ry="11.300" fill="#f58aa8" stroke="#e96a8e" stroke-width=".600" transform="rotate(90.00 621.9 303.6)"/><ellipse cx="621.9" cy="279.6" rx="3.900" ry="11.300" fill="#f58aa8" stroke="#e96a8e" stroke-width=".600" transform="rotate(102.86 621.9 303.6)"/><ellipse cx="621.9" cy="279.6" rx="3.900" ry="11.300" fill="#f58aa8" stroke="#e96a8e" stroke-width=".600" transform="rotate(115.71 621.9 303.6)"/><ellipse cx="621.9" cy="279.6" rx="3.900" ry="11.300" fill="#f58aa8" stroke="#e96a8e" stroke-width=".600" transform="rotate(128.57 621.9 303.6)"/><ellipse cx="621.9" cy="279.6" rx="3.900" ry="11.300" fill="#f58aa8" stroke="#e96a8e" stroke-width=".600" transform="rotate(141.43 621.9 303.6)"/><ellipse cx="621.9" cy="279.6" rx="3.900" ry="11.300" fill="#f58aa8" stroke="#e96a8e" stroke-width=".600" transform="rotate(154.29 621.9 303.6)"/><ellipse cx="621.9" cy="279.6" rx="3.900" ry="11.300" fill="#f58aa8" stroke="#e96a8e" stroke-width=".600" transform="rotate(167.14 621.9 303.6)"/><ellipse cx="621.9" cy="279.6" rx="3.900" ry="11.300" fill="#f58aa8" stroke="#e96a8e" stroke-width=".600" transform="rotate(180.00 621.9 303.6)"/><ellipse cx="621.9" cy="279.6" rx="3.900" ry="11.300" fill="#f58aa8" stroke="#e96a8e" stroke-width=".600" transform="rotate(192.86 621.9 303.6)"/><ellipse cx="621.9" cy="279.6" rx="3.900" ry="11.300" fill="#f58aa8" stroke="#e96a8e" stroke-width=".600" transform="rotate(205.71 621.9 303.6)"/><ellipse cx="621.9" cy="279.6" rx="3.900" ry="11.300" fill="#f58aa8" stroke="#e96a8e" stroke-width=".600" transform="rotate(218.57 621.9 303.6)"/><ellipse cx="621.9" cy="279.6" rx="3.900" ry="11.300" fill="#f58aa8" stroke="#e96a8e" stroke-width=".600" transform="rotate(231.43 621.9 303.6)"/><ellipse cx="621.9" cy="279.6" rx="3.900" ry="11.300" fill="#f58aa8" stroke="#e96a8e" stroke-width=".600" transform="rotate(244.29 621.9 303.6)"/><ellipse cx="621.9" cy="279.6" rx="3.900" ry="11.300" fill="#f58aa8" stroke="#e96a8e" stroke-width=".600" transform="rotate(257.14 621.9 303.6)"/><ellipse cx="621.9" cy="279.6" rx="3.900" ry="11.300" fill="#f58aa8" stroke="#e96a8e" stroke-width=".600" transform="rotate(270.00 621.9 303.6)"/><ellipse cx="621.9" cy="279.6" rx="3.900" ry="11.300" fill="#f58aa8" stroke="#e96a8e" stroke-width=".600" transform="rotate(282.86 621.9 303.6)"/><ellipse cx="621.9" cy="279.6" rx="3.900" ry="11.300" fill="#f58aa8" stroke="#e96a8e" stroke-width=".600" transform="rotate(295.71 621.9 303.6)"/><ellipse cx="621.9" cy="279.6" rx="3.900" ry="11.300" fill="#f58aa8" stroke="#e96a8e" stroke-width=".600" transform="rotate(308.57 621.9 303.6)"/><ellipse cx="621.9" cy="279.6" rx="3.900" ry="11.300" fill="#f58aa8" stroke="#e96a8e" stroke-width=".600" transform="rotate(321.43 621.9 303.6)"/><ellipse cx="621.9" cy="279.6" rx="3.900" ry="11.300" fill="#f58aa8" stroke="#e96a8e" stroke-width=".600" transform="rotate(334.29 621.9 303.6)"/><ellipse cx="621.9" cy="279.6" rx="3.900" ry="11.300" fill="#f58aa8" stroke="#e96a8e" stroke-width=".600" transform="rotate(347.14 621.9 303.6)"/><ellipse cx="621.9" cy="282.6" rx="4.600" ry="11" fill="#fcc4d2" stroke="#f0809e" stroke-width=".700" transform="rotate(6.00 621.9 303.6)"/><ellipse cx="621.9" cy="282.6" rx="4.600" ry="11" fill="#fcc4d2" stroke="#f0809e" stroke-width=".700" transform="rotate(31.71 621.9 303.6)"/><ellipse cx="621.9" cy="282.6" rx="4.600" ry="11" fill="#fcc4d2" stroke="#f0809e" stroke-width=".700" transform="rotate(57.43 621.9 303.6)"/><ellipse cx="621.9" cy="282.6" rx="4.600" ry="11" fill="#fcc4d2" stroke="#f0809e" stroke-width=".700" transform="rotate(83.14 621.9 303.6)"/><ellipse cx="621.9" cy="282.6" rx="4.600" ry="11" fill="#fcc4d2" stroke="#f0809e" stroke-width=".700" transform="rotate(108.86 621.9 303.6)"/><ellipse cx="621.9" cy="282.6" rx="4.600" ry="11" fill="#fcc4d2" stroke="#f0809e" stroke-width=".700" transform="rotate(134.57 621.9 303.6)"/><ellipse cx="621.9" cy="282.6" rx="4.600" ry="11" fill="#fcc4d2" stroke="#f0809e" stroke-width=".700" transform="rotate(160.29 621.9 303.6)"/><ellipse cx="621.9" cy="282.6" rx="4.600" ry="11" fill="#fcc4d2" stroke="#f0809e" stroke-width=".700" transform="rotate(186.00 621.9 303.6)"/><ellipse cx="621.9" cy="282.6" rx="4.600" ry="11" fill="#fcc4d2" stroke="#f0809e" stroke-width=".700" transform="rotate(211.71 621.9 303.6)"/><ellipse cx="621.9" cy="282.6" rx="4.600" ry="11" fill="#fcc4d2" stroke="#f0809e" stroke-width=".700" transform="rotate(237.43 621.9 303.6)"/><ellipse cx="621.9" cy="282.6" rx="4.600" ry="11" fill="#fcc4d2" stroke="#f0809e" stroke-width=".700" transform="rotate(263.14 621.9 303.6)"/><ellipse cx="621.9" cy="282.6" rx="4.600" ry="11" fill="#fcc4d2" stroke="#f0809e" stroke-width=".700" transform="rotate(288.86 621.9 303.6)"/><ellipse cx="621.9" cy="282.6" rx="4.600" ry="11" fill="#fcc4d2" stroke="#f0809e" stroke-width=".700" transform="rotate(314.57 621.9 303.6)"/><ellipse cx="621.9" cy="282.6" rx="4.600" ry="11" fill="#fcc4d2" stroke="#f0809e" stroke-width=".700" transform="rotate(340.29 621.9 303.6)"/><circle cx="621.9" cy="303.6" r="14.300" fill="#dba86a" stroke="#c8925a" stroke-width=".800"/><circle cx="621.9" cy="303.6" r="6.800" fill="#e4d08a" stroke="#caa860" stroke-width=".800"/><rect x="681.30" y="276.00" width="6.20" height="5.2" fill="#000"/><rect x="762.10" y="276.00" width="6.20" height="5.2" fill="#000"/><path d="M716.80 276.80Q724.80 271.80 732.80 276.80" fill="none" stroke="#000" stroke-width="2.600"/><circle cx="702.2" cy="282.3" r="15.6" fill="url(#teal)"/><circle cx="747.4" cy="282.3" r="15.6" fill="url(#teal)"/><g clip-path="url(#lensL1)" fill="#000"><rect x="686.6" y="277.80" width="31.2" height="2.2"/><rect x="686.6" y="281.80" width="31.2" height="2.2"/><rect x="686.6" y="285.60" width="31.2" height="2"/><rect x="686.6" y="289.10" width="31.2" height="1.8"/><rect x="686.6" y="292.50" width="31.2" height="1.5"/></g><circle cx="702.2" cy="282.3" r="15.6" fill="none" stroke="#000" stroke-width="3.2"/><circle cx="747.4" cy="282.3" r="15.6" fill="none" stroke="#000" stroke-width="3.2"/><rect x="787.10" y="276.00" width="6.20" height="5.2" fill="#000"/><rect x="868.10" y="276.00" width="6.20" height="5.2" fill="#000"/><path d="M822.60 276.80Q830.70 271.80 838.80 276.80" fill="none" stroke="#000" stroke-width="2.600"/><circle cx="808" cy="282.3" r="15.6" fill="url(#lav)"/><circle cx="853.4" cy="282.3" r="15.6" fill="url(#lav)"/><g clip-path="url(#lensL2)" fill="#000"><rect x="792.4" y="280.50" width="31.2" height="2.4"/><rect x="792.4" y="285.90" width="31.2" height="2.6"/><rect x="792.4" y="291.10" width="31.2" height="2.4"/></g><circle cx="808" cy="282.3" r="15.6" fill="none" stroke="#000" stroke-width="3.2"/><circle cx="853.4" cy="282.3" r="15.6" fill="none" stroke="#000" stroke-width="3.2"/><rect x="681.30" y="320.00" width="6.20" height="5.2" fill="#000"/><rect x="762.10" y="320.00" width="6.20" height="5.2" fill="#000"/><path d="M716.80 320.80Q724.80 315.80 732.80 320.80" fill="none" stroke="#000" stroke-width="2.600"/><circle cx="702.2" cy="326.3" r="15.6" fill="url(#pink)"/><circle cx="747.4" cy="326.3" r="15.6" fill="url(#pink)"/><g clip-path="url(#lensL3)" fill="#000"><rect x="686.6" y="323.30" width="31.2" height="2.6"/><rect x="686.6" y="333.30" width="31.2" height="2.6"/></g><circle cx="702.2" cy="326.3" r="15.6" fill="none" stroke="#000" stroke-width="3.2"/><circle cx="747.4" cy="326.3" r="15.6" fill="none" stroke="#000" stroke-width="3.2"/><rect x="787.10" y="320.00" width="6.20" height="5.2" fill="#000"/><rect x="868.10" y="320.00" width="6.20" height="5.2" fill="#000"/><path d="M822.60 320.80Q830.70 315.80 838.80 320.80" fill="none" stroke="#000" stroke-width="2.600"/><circle cx="808" cy="326.3" r="15.6" fill="url(#blu)"/><circle cx="853.4" cy="326.3" r="15.6" fill="url(#blu)"/><g clip-path="url(#lensL4)" fill="#000"><rect x="792.4" y="325.80" width="31.2" height="2.4"/></g><circle cx="808" cy="326.3" r="15.6" fill="none" stroke="#000" stroke-width="3.2"/><circle cx="853.4" cy="326.3" r="15.6" fill="none" stroke="#000" stroke-width="3.2"/><rect x="579" y="410.800" width="66" height="66.200" fill="#b9b9b9"/><rect x="573.600" y="407.300" width="65" height="65" fill="#d8effa" stroke="#000" stroke-width="1.200"/><circle cx="606" cy="439.900" r="31.800" fill="url(#p3g)" stroke="#000" stroke-width="1.200"/><path d="M588.500 424.500A23.500 23.500 0 0 1 623.500 424.500" fill="none" stroke="#000" stroke-width="1.300" stroke-dasharray="9 3 2.500 3"/><path d="M588.500 455.300A23.500 23.500 0 0 0 623.500 455.300" fill="none" stroke="#000" stroke-width="1.300" stroke-dasharray="9 3 2.500 3"/><rect x="578" y="436.300" width="5" height="3" fill="#000"/><rect x="629.500" y="436.300" width="4.500" height="3" fill="#000"/><path d="M601.500 437Q606.400 433.500 611.300 437" fill="none" stroke="#000" stroke-width="1.500"/><circle cx="591.900" cy="439.900" r="9.700" fill="url(#teal)"/><circle cx="620.900" cy="439.900" r="9.700" fill="url(#teal)"/><g clip-path="url(#lensP3)" fill="#000"><rect x="580" y="437" width="24" height="1.400"/><rect x="580" y="440" width="24" height="1.300"/><rect x="580" y="442.800" width="24" height="1.300"/><rect x="580" y="445.600" width="24" height="1.200"/></g><circle cx="591.900" cy="439.900" r="9.700" fill="none" stroke="#000" stroke-width="1.700"/><circle cx="620.900" cy="439.900" r="9.700" fill="none" stroke="#000" stroke-width="1.700"/><path d="M620.9 434.59999999999997Q622.066 438.734 626.1999999999999 439.9Q622.066 441.066 620.9 445.2Q619.7339999999999 441.066 615.6 439.9Q619.7339999999999 438.734 620.9 434.59999999999997Z" fill="#fff"/></svg>
</div>
<svg class="a" style="left:33px;top:139px;" width="995" height="17" viewBox="0 0 995 17"><rect x="18.00" y="14" width="1" height="1" fill="#666"/><rect x="25.00" y="14" width="1" height="1" fill="#666"/><rect x="32.00" y="13" width="1" height="2.200" fill="#555"/><rect x="40.00" y="14" width="1" height="1" fill="#666"/><rect x="47.00" y="14" width="1" height="1" fill="#666"/><rect x="55.00" y="14" width="1" height="1" fill="#666"/><rect x="62.00" y="14" width="1" height="1" fill="#666"/><rect x="69.00" y="10" width="1" height="5" fill="#555"/><rect x="77.00" y="14" width="1" height="1" fill="#666"/><rect x="84.00" y="14" width="1" height="1" fill="#666"/><rect x="91.00" y="14" width="1" height="1" fill="#666"/><rect x="99.00" y="14" width="1" height="1" fill="#666"/><rect x="106.00" y="13" width="1" height="2.200" fill="#555"/><rect x="114.00" y="14" width="1" height="1" fill="#666"/><rect x="121.00" y="14" width="1" height="1" fill="#666"/><rect x="128.00" y="14" width="1" height="1" fill="#666"/><rect x="136.00" y="14" width="1" height="1" fill="#666"/><rect x="143.00" y="10" width="1" height="5" fill="#555"/><rect x="150.00" y="14" width="1" height="1" fill="#666"/><rect x="158.00" y="14" width="1" height="1" fill="#666"/><rect x="165.00" y="14" width="1" height="1" fill="#666"/><rect x="172.00" y="14" width="1" height="1" fill="#666"/><rect x="180.00" y="13" width="1" height="2.200" fill="#555"/><rect x="187.00" y="14" width="1" height="1" fill="#666"/><rect x="195.00" y="14" width="1" height="1" fill="#666"/><rect x="202.00" y="14" width="1" height="1" fill="#666"/><rect x="209.00" y="14" width="1" height="1" fill="#666"/><rect x="217.00" y="10" width="1" height="5" fill="#555"/><rect x="224.00" y="14" width="1" height="1" fill="#666"/><rect x="231.00" y="14" width="1" height="1" fill="#666"/><rect x="239.00" y="14" width="1" height="1" fill="#666"/><rect x="246.00" y="14" width="1" height="1" fill="#666"/><rect x="254.00" y="13" width="1" height="2.200" fill="#555"/><rect x="261.00" y="14" width="1" height="1" fill="#666"/><rect x="268.00" y="14" width="1" height="1" fill="#666"/><rect x="276.00" y="14" width="1" height="1" fill="#666"/><rect x="283.00" y="14" width="1" height="1" fill="#666"/><rect x="290.00" y="10" width="1" height="5" fill="#555"/><rect x="298.00" y="14" width="1" height="1" fill="#666"/><rect x="305.00" y="14" width="1" height="1" fill="#666"/><rect x="313.00" y="14" width="1" height="1" fill="#666"/><rect x="320.00" y="14" width="1" height="1" fill="#666"/><rect x="327.00" y="13" width="1" height="2.200" fill="#555"/><rect x="335.00" y="14" width="1" height="1" fill="#666"/><rect x="342.00" y="14" width="1" height="1" fill="#666"/><rect x="349.00" y="14" width="1" height="1" fill="#666"/><rect x="357.00" y="14" width="1" height="1" fill="#666"/><rect x="364.00" y="10" width="1" height="5" fill="#555"/><rect x="371.00" y="14" width="1" height="1" fill="#666"/><rect x="379.00" y="14" width="1" height="1" fill="#666"/><rect x="386.00" y="14" width="1" height="1" fill="#666"/><rect x="394.00" y="14" width="1" height="1" fill="#666"/><rect x="401.00" y="13" width="1" height="2.200" fill="#555"/><rect x="408.00" y="14" width="1" height="1" fill="#666"/><rect x="416.00" y="14" width="1" height="1" fill="#666"/><rect x="423.00" y="14" width="1" height="1" fill="#666"/><rect x="430.00" y="14" width="1" height="1" fill="#666"/><rect x="438.00" y="10" width="1" height="5" fill="#555"/><rect x="445.00" y="14" width="1" height="1" fill="#666"/><rect x="453.00" y="14" width="1" height="1" fill="#666"/><rect x="460.00" y="14" width="1" height="1" fill="#666"/><rect x="467.00" y="14" width="1" height="1" fill="#666"/><rect x="475.00" y="13" width="1" height="2.200" fill="#555"/><rect x="482.00" y="14" width="1" height="1" fill="#666"/><rect x="489.00" y="14" width="1" height="1" fill="#666"/><rect x="497.00" y="14" width="1" height="1" fill="#666"/><rect x="504.00" y="14" width="1" height="1" fill="#666"/><rect x="512.00" y="10" width="1" height="5" fill="#555"/><rect x="519.00" y="14" width="1" height="1" fill="#666"/><rect x="526.00" y="14" width="1" height="1" fill="#666"/><rect x="534.00" y="14" width="1" height="1" fill="#666"/><rect x="541.00" y="14" width="1" height="1" fill="#666"/><rect x="548.00" y="13" width="1" height="2.200" fill="#555"/><rect x="556.00" y="14" width="1" height="1" fill="#666"/><rect x="563.00" y="14" width="1" height="1" fill="#666"/><rect x="570.00" y="14" width="1" height="1" fill="#666"/><rect x="578.00" y="14" width="1" height="1" fill="#666"/><rect x="585.00" y="10" width="1" height="5" fill="#555"/><rect x="593.00" y="14" width="1" height="1" fill="#666"/><rect x="600.00" y="14" width="1" height="1" fill="#666"/><rect x="607.00" y="14" width="1" height="1" fill="#666"/><rect x="615.00" y="14" width="1" height="1" fill="#666"/><rect x="622.00" y="13" width="1" height="2.200" fill="#555"/><rect x="629.00" y="14" width="1" height="1" fill="#666"/><rect x="637.00" y="14" width="1" height="1" fill="#666"/><rect x="644.00" y="14" width="1" height="1" fill="#666"/><rect x="652.00" y="14" width="1" height="1" fill="#666"/><rect x="659.00" y="10" width="1" height="5" fill="#555"/><rect x="666.00" y="14" width="1" height="1" fill="#666"/><rect x="674.00" y="14" width="1" height="1" fill="#666"/><rect x="681.00" y="14" width="1" height="1" fill="#666"/><rect x="688.00" y="14" width="1" height="1" fill="#666"/><rect x="696.00" y="13" width="1" height="2.200" fill="#555"/><rect x="703.00" y="14" width="1" height="1" fill="#666"/><rect x="710.00" y="14" width="1" height="1" fill="#666"/><rect x="718.00" y="14" width="1" height="1" fill="#666"/><rect x="725.00" y="14" width="1" height="1" fill="#666"/><rect x="733.00" y="10" width="1" height="5" fill="#555"/><rect x="740.00" y="14" width="1" height="1" fill="#666"/><rect x="747.00" y="14" width="1" height="1" fill="#666"/><rect x="755.00" y="14" width="1" height="1" fill="#666"/><rect x="762.00" y="14" width="1" height="1" fill="#666"/><rect x="769.00" y="13" width="1" height="2.200" fill="#555"/><rect x="777.00" y="14" width="1" height="1" fill="#666"/><rect x="784.00" y="14" width="1" height="1" fill="#666"/><rect x="792.00" y="14" width="1" height="1" fill="#666"/><rect x="799.00" y="14" width="1" height="1" fill="#666"/><rect x="806.00" y="10" width="1" height="5" fill="#555"/><rect x="814.00" y="14" width="1" height="1" fill="#666"/><rect x="821.00" y="14" width="1" height="1" fill="#666"/><rect x="828.00" y="14" width="1" height="1" fill="#666"/><rect x="836.00" y="14" width="1" height="1" fill="#666"/><rect x="843.00" y="13" width="1" height="2.200" fill="#555"/><rect x="851.00" y="14" width="1" height="1" fill="#666"/><rect x="858.00" y="14" width="1" height="1" fill="#666"/><rect x="865.00" y="14" width="1" height="1" fill="#666"/><rect x="873.00" y="14" width="1" height="1" fill="#666"/><rect x="880.00" y="10" width="1" height="5" fill="#555"/><rect x="887.00" y="14" width="1" height="1" fill="#666"/><rect x="895.00" y="14" width="1" height="1" fill="#666"/><rect x="902.00" y="14" width="1" height="1" fill="#666"/><rect x="909.00" y="14" width="1" height="1" fill="#666"/><rect x="917.00" y="13" width="1" height="2.200" fill="#555"/><rect x="924.00" y="14" width="1" height="1" fill="#666"/><rect x="932.00" y="14" width="1" height="1" fill="#666"/><rect x="939.00" y="14" width="1" height="1" fill="#666"/><rect x="946.00" y="14" width="1" height="1" fill="#666"/><rect x="954.00" y="10" width="1" height="5" fill="#555"/><rect x="961.00" y="14" width="1" height="1" fill="#666"/><rect x="968.00" y="14" width="1" height="1" fill="#666"/><rect x="976.00" y="14" width="1" height="1" fill="#666"/><rect x="983.00" y="14" width="1" height="1" fill="#666"/><rect x="991.00" y="13" width="1" height="2.200" fill="#555"/></svg>
<span class="t" id="t26" style="left:94.40px;top:137.00px;font-size:10px;color:#767676;letter-spacing:-0.444px;">200</span>
<span class="t" id="t27" style="left:172.65px;top:137.00px;font-size:10px;color:#767676;">0</span>
<span class="t" id="t28" style="left:241.80px;top:137.00px;font-size:10px;color:#767676;letter-spacing:-0.444px;">200</span>
<span class="t" id="t29" style="left:315.50px;top:137.00px;font-size:10px;color:#767676;letter-spacing:-0.444px;">400</span>
<span class="t" id="t30" style="left:389.20px;top:137.00px;font-size:10px;color:#767676;letter-spacing:-0.444px;">600</span>
<span class="t" id="t31" style="left:462.90px;top:137.00px;font-size:10px;color:#767676;letter-spacing:-0.444px;">800</span>
<span class="t" id="t32" style="left:534.00px;top:137.00px;font-size:10px;color:#767676;letter-spacing:-0.417px;">1000</span>
<span class="t" id="t33" style="left:607.70px;top:137.00px;font-size:10px;color:#767676;letter-spacing:-0.417px;">1200</span>
<span class="t" id="t34" style="left:681.40px;top:137.00px;font-size:10px;color:#767676;letter-spacing:-0.417px;">1400</span>
<span class="t" id="t35" style="left:755.10px;top:137.00px;font-size:10px;color:#767676;letter-spacing:-0.417px;">1600</span>
<span class="t" id="t36" style="left:828.80px;top:137.00px;font-size:10px;color:#767676;letter-spacing:-0.417px;">1800</span>
<span class="t" id="t37" style="left:902.50px;top:137.00px;font-size:10px;color:#767676;letter-spacing:-0.417px;">2000</span>
<span class="t" id="t38" style="left:981.40px;top:137.00px;font-size:10px;color:#767676;letter-spacing:0.114px;">пикселей</span>
<svg class="a" style="left:36px;top:142px;" width="11" height="12" viewBox="0 0 11 12"><path d="M3 0V11M0 3H10" stroke="#777" stroke-width="1" stroke-dasharray="1 1" fill="none"/><path d="M3.500 3.500L9.500 9.500" stroke="#555" stroke-width="1.300"/><path d="M2.500 2.500h3l-3 3z" fill="#555"/></svg>
<svg class="a" style="left:33px;top:157px;" width="16" height="526" viewBox="0 0 16 526"><rect x="13" y="517.00" width="1" height="1" fill="#666"/><rect x="13" y="509.00" width="1" height="1" fill="#666"/><rect x="13" y="502.00" width="1" height="1" fill="#666"/><rect x="9" y="495.00" width="5" height="1" fill="#555"/><rect x="13" y="487.00" width="1" height="1" fill="#666"/><rect x="13" y="480.00" width="1" height="1" fill="#666"/><rect x="13" y="472.00" width="1" height="1" fill="#666"/><rect x="13" y="465.00" width="1" height="1" fill="#666"/><rect x="12" y="458.00" width="2.200" height="1" fill="#555"/><rect x="13" y="450.00" width="1" height="1" fill="#666"/><rect x="13" y="443.00" width="1" height="1" fill="#666"/><rect x="13" y="436.00" width="1" height="1" fill="#666"/><rect x="13" y="428.00" width="1" height="1" fill="#666"/><rect x="9" y="421.00" width="5" height="1" fill="#555"/><rect x="13" y="413.00" width="1" height="1" fill="#666"/><rect x="13" y="406.00" width="1" height="1" fill="#666"/><rect x="13" y="399.00" width="1" height="1" fill="#666"/><rect x="13" y="391.00" width="1" height="1" fill="#666"/><rect x="12" y="384.00" width="2.200" height="1" fill="#555"/><rect x="13" y="377.00" width="1" height="1" fill="#666"/><rect x="13" y="369.00" width="1" height="1" fill="#666"/><rect x="13" y="362.00" width="1" height="1" fill="#666"/><rect x="13" y="354.00" width="1" height="1" fill="#666"/><rect x="9" y="347.00" width="5" height="1" fill="#555"/><rect x="13" y="340.00" width="1" height="1" fill="#666"/><rect x="13" y="332.00" width="1" height="1" fill="#666"/><rect x="13" y="325.00" width="1" height="1" fill="#666"/><rect x="13" y="318.00" width="1" height="1" fill="#666"/><rect x="12" y="310.00" width="2.200" height="1" fill="#555"/><rect x="13" y="303.00" width="1" height="1" fill="#666"/><rect x="13" y="296.00" width="1" height="1" fill="#666"/><rect x="13" y="288.00" width="1" height="1" fill="#666"/><rect x="13" y="281.00" width="1" height="1" fill="#666"/><rect x="9" y="273.00" width="5" height="1" fill="#555"/><rect x="13" y="266.00" width="1" height="1" fill="#666"/><rect x="13" y="259.00" width="1" height="1" fill="#666"/><rect x="13" y="251.00" width="1" height="1" fill="#666"/><rect x="13" y="244.00" width="1" height="1" fill="#666"/><rect x="12" y="237.00" width="2.200" height="1" fill="#555"/><rect x="13" y="229.00" width="1" height="1" fill="#666"/><rect x="13" y="222.00" width="1" height="1" fill="#666"/><rect x="13" y="214.00" width="1" height="1" fill="#666"/><rect x="13" y="207.00" width="1" height="1" fill="#666"/><rect x="9" y="200.00" width="5" height="1" fill="#555"/><rect x="13" y="192.00" width="1" height="1" fill="#666"/><rect x="13" y="185.00" width="1" height="1" fill="#666"/><rect x="13" y="178.00" width="1" height="1" fill="#666"/><rect x="13" y="170.00" width="1" height="1" fill="#666"/><rect x="12" y="163.00" width="2.200" height="1" fill="#555"/><rect x="13" y="155.00" width="1" height="1" fill="#666"/><rect x="13" y="148.00" width="1" height="1" fill="#666"/><rect x="13" y="141.00" width="1" height="1" fill="#666"/><rect x="13" y="133.00" width="1" height="1" fill="#666"/><rect x="9" y="126.00" width="5" height="1" fill="#555"/><rect x="13" y="119.00" width="1" height="1" fill="#666"/><rect x="13" y="111.00" width="1" height="1" fill="#666"/><rect x="13" y="104.00" width="1" height="1" fill="#666"/><rect x="13" y="97.00" width="1" height="1" fill="#666"/><rect x="12" y="89.00" width="2.200" height="1" fill="#555"/><rect x="13" y="82.00" width="1" height="1" fill="#666"/><rect x="13" y="74.00" width="1" height="1" fill="#666"/><rect x="13" y="67.00" width="1" height="1" fill="#666"/><rect x="13" y="60.00" width="1" height="1" fill="#666"/><rect x="9" y="52.00" width="5" height="1" fill="#555"/><rect x="13" y="45.00" width="1" height="1" fill="#666"/><rect x="13" y="38.00" width="1" height="1" fill="#666"/><rect x="13" y="30.00" width="1" height="1" fill="#666"/><rect x="13" y="23.00" width="1" height="1" fill="#666"/><rect x="12" y="15.00" width="2.200" height="1" fill="#555"/><rect x="13" y="8.00" width="1" height="1" fill="#666"/><rect x="13" y="1.00" width="1" height="1" fill="#666"/></svg>
<div class="a vr" style="left:33px;top:581.5px;width:7.5px;">0</div>
<div class="a vr" style="left:33px;top:512.4px;width:16.6px;">200</div>
<div class="a vr" style="left:33px;top:438.7px;width:16.6px;">400</div>
<div class="a vr" style="left:33px;top:365.0px;width:16.6px;">600</div>
<div class="a vr" style="left:33px;top:291.3px;width:16.6px;">800</div>
<div class="a vr" style="left:33px;top:220.2px;width:21.8px;">1000</div>
<div class="a vr" style="left:33.5px;top:679px;width:46px;font-size:9.5px">пикселей</div>
<div class="a " style="left:1012px;top:157px;width:16px;height:510px;background:#fff;"></div>
<div class="a " style="left:1012px;top:157px;width:16px;height:17px;background:#f4f4f4;"></div>
<svg class="a" style="left:1015px;top:162px;" width="10" height="7" viewBox="0 0 10 7"><path d="M1 6L5 2L9 6" fill="none" stroke="#444" stroke-width="1.800"/></svg>
<div class="a " style="left:1012px;top:253px;width:15px;height:317px;background:#cbcbcb;"></div>
<div class="a " style="left:1012px;top:649px;width:16px;height:17px;background:#f4f4f4;"></div>
<svg class="a" style="left:1015px;top:655px;" width="10" height="7" viewBox="0 0 10 7"><path d="M1 1L5 5L9 1" fill="none" stroke="#444" stroke-width="1.800"/></svg>
<div class="a " style="left:50px;top:667px;width:962px;height:16px;background:#fff;"></div>
<div class="a " style="left:50px;top:667px;width:17px;height:16px;background:#f4f4f4;"></div>
<svg class="a" style="left:55px;top:670px;" width="7" height="10" viewBox="0 0 7 10"><path d="M6 1L2 5L6 9" fill="none" stroke="#444" stroke-width="1.800"/></svg>
<div class="a " style="left:170px;top:667px;width:727px;height:15px;background:#cbcbcb;"></div>
<div class="a " style="left:994px;top:667px;width:34px;height:16px;background:#f4f4f4;"></div>
<svg class="a" style="left:999px;top:670px;" width="7" height="10" viewBox="0 0 7 10"><path d="M1 1L5 5L1 9" fill="none" stroke="#444" stroke-width="1.800"/></svg>
<svg class="a" style="left:1014px;top:668px;" width="13" height="14" viewBox="0 0 13 14"><circle cx="5" cy="5.500" r="4.300" fill="none" stroke="#444" stroke-width="1.100"/><path d="M8.200 8.700L12 12.500" stroke="#444" stroke-width="1.700"/><path d="M5 3v5M2.500 5.500h5" stroke="#666" stroke-width="1" stroke-dasharray="1.500 1.200"/></svg>
<div class="a " style="left:1028px;top:116px;width:2px;height:613px;background:#f8f8f8;"></div>
<div class="a " style="left:1030px;top:117px;width:1px;height:611px;background:#c6c6c6;"></div>
<div class="a " style="left:1031px;top:117px;width:2px;height:613px;background:#fbfbfb;"></div>
<span class="t" id="t39" style="left:175.90px;top:232.00px;font-size:12.2px;color:#2b9fd9;letter-spacing:0.033px;">Страница 1</span>
<span class="t" id="t40" style="left:573.90px;top:232.00px;font-size:12.2px;color:#a3a3a3;letter-spacing:0.066px;">Страница 2</span>
<span class="t" id="t41" style="left:572.90px;top:392.00px;font-size:12.2px;color:#a3a3a3;letter-spacing:0.044px;">Страница 3</span>
<div class="a " style="left:1033px;top:118px;width:313px;height:22px;background:#e9e9e9;"></div>
<div class="a " style="left:1033px;top:140px;width:313px;height:1px;background:#b4b4b4;"></div>
<span class="t" id="t42" style="left:1039.10px;top:121.00px;font-size:12px;color:#111;">Обучения</span>
<svg class="a" style="left:1310px;top:125px;" width="10" height="8" viewBox="0 0 10 8"><path d="M0 .300L4.500 4L0 7.700ZM5 .300L9.500 4L5 7.700Z" fill="#b4b4b4"/></svg>
<svg class="a" style="left:1329px;top:125px;" width="9" height="8" viewBox="0 0 9 8"><path d="M.500 .300L8.500 7.700M8.500 .300L.500 7.700" stroke="#b4b4b4" stroke-width="1.500" fill="none"/></svg>
<div class="a " style="left:1033px;top:141px;width:291px;height:79px;background:#f4f4f4;"></div>
<div class="a " style="left:1033px;top:220px;width:291px;height:478px;background:#fff;"></div>
<div class="a " style="left:1033px;top:698px;width:291px;height:31px;background:#f4f4f4;"></div>
<div class="a " style="left:1323px;top:141px;width:1px;height:588px;background:#c9c9c9;"></div>
<div class="a " style="left:1042px;top:150px;width:24px;height:24px;background:#fff;border:1px solid #b2b2b2;"></div>
<svg class="a" style="left:1046px;top:154px;" width="16" height="16" viewBox="0 0 16 16"><path d="M.500 2.500V13L3 10.800L4.800 14.800L6.600 14L4.800 10.200H7.800Z" fill="#222"/></svg>
<span class="t" id="t43" style="left:1055.00px;top:151.00px;font-size:14.5px;color:#444;">?</span>
<span class="t" id="t44" style="left:1042.10px;top:187.00px;font-size:12px;color:#111;letter-spacing:-0.157px;">Советы</span>
<svg class="a" style="left:1311px;top:226px;" width="9" height="5" viewBox="0 0 9 5"><path d="M0 5H9L4.500 0Z" fill="#8c8c8c"/></svg>
<div class="a " style="left:1311.5px;top:238.5px;width:8px;height:345px;background:#8b8b8b;border-radius:4px;"></div>
<svg class="a" style="left:1311px;top:686px;" width="9" height="5" viewBox="0 0 9 5"><path d="M0 0H9L4.500 5Z" fill="#8c8c8c"/></svg>
<span class="t" id="t45" style="left:1043.80px;top:236.00px;font-size:13.5px;color:#333;letter-spacing:0.330px;">Выделение объектов</span>
<svg class="a" style="left:1050px;top:264px;" width="11" height="23" viewBox="0 0 11 23"><path d="M.500 0V17.500L4 14.300L7 21.500L9.500 20.400L6.500 13.300H11Z" fill="#000"/></svg>
<span class="t" id="t46" style="left:1068.80px;top:266.00px;font-size:12px;color:#111;font-weight:bold;letter-spacing:-0.134px;">Указатель</span>
<div class="a" style="left:1044.500px;top:304.4px;width:3.200px;height:3.200px;border-radius:2px;background:#333"></div>
<span class="t" id="t47" style="left:1054.20px;top:297.00px;font-size:11px;color:#333;letter-spacing:-0.012px;">Чтобы выбрать объект, щелкните его.</span>
<span class="t" id="t48" style="left:1054.20px;top:315.00px;font-size:11px;color:#333;letter-spacing:0.033px;">Удерживайте нажатой клавишу <b style="font-size:11.5px">Alt</b>, чтобы</span>
<span class="t" id="t49" style="left:1054.20px;top:332.00px;font-size:11px;color:#333;letter-spacing:0.009px;">выбрать объект, который находится за другим</span>
<span class="t" id="t50" style="left:1054.20px;top:350.00px;font-size:11px;color:#333;letter-spacing:-0.014px;">объектом, или клавишу <b style="font-size:11.5px">Ctrl</b>, чтобы выбрать</span>
<span class="t" id="t51" style="left:1054.20px;top:367.00px;font-size:11px;color:#333;letter-spacing:0.081px;">объект в группе.</span>
<div class="a" style="left:1044.500px;top:396.09999999999997px;width:3.200px;height:3.200px;border-radius:2px;background:#333"></div>
<span class="t" id="t52" style="left:1054.20px;top:389.00px;font-size:11px;color:#333;letter-spacing:0.008px;">Чтобы выбрать несколько объектов, щелкните</span>
<span class="t" id="t53" style="left:1054.20px;top:405.00px;font-size:11px;color:#333;letter-spacing:0.037px;">каждый объект, удерживая нажатой клавишу</span>
<span class="t" id="t54" style="left:1054.20px;top:423.00px;font-size:11px;color:#333;letter-spacing:-0.092px;"><b style="font-size:11.5px">Shift</b>, или перетащите указатель для</span>
<span class="t" id="t55" style="left:1054.20px;top:440.00px;font-size:11px;color:#333;letter-spacing:0.103px;">образования выделяющей рамки вокруг</span>
<span class="t" id="t56" style="left:1054.20px;top:456.00px;font-size:11px;color:#333;letter-spacing:0.060px;">объектов.</span>
<div class="a" style="left:1044.500px;top:486.09999999999997px;width:3.200px;height:3.200px;border-radius:2px;background:#333"></div>
<span class="t" id="t57" style="left:1054.20px;top:479.00px;font-size:11px;color:#333;letter-spacing:-0.068px;">Чтобы выбрать все объекты, дважды щелкните</span>
<span class="t" id="t58" style="left:1054.20px;top:497.00px;font-size:11px;color:#333;letter-spacing:0.031px;"><b style="font-size:11.5px">указатель</b>.</span>
<div class="a " style="left:1044px;top:529px;width:256px;height:1px;background:#c4c4c4;"></div>
<span class="t" id="t59" style="left:1043.80px;top:543.00px;font-size:13.5px;color:#333;letter-spacing:0.673px;">Подробнее</span>
<svg class="a" style="left:1051px;top:573px;" width="20" height="20" viewBox="0 0 20 20"><circle cx="10" cy="9.800" r="8.700" fill="none" stroke="#111" stroke-width="1.700"/><circle cx="10" cy="5.600" r="1.300" fill="#111"/><path d="M8.300 8.500H10.900V13.800M8 14H12.500" stroke="#111" stroke-width="1.500" fill="none"/></svg>
<span class="t" id="t60" style="left:1100.90px;top:576.00px;font-size:12.3px;color:#222;letter-spacing:0.459px;">Раздел справки</span>
<span class="t" id="t61" style="left:1100.90px;top:594.00px;font-size:11px;color:#4a8fd8;letter-spacing:0.112px;">Выделение объектов</span>
<svg class="a" style="left:1051px;top:628px;" width="20" height="20" viewBox="0 0 20 20"><circle cx="10" cy="9.400" r="8.700" fill="none" stroke="#666" stroke-width="1.300"/><path d="M7.800 5.500L14 9.400L7.800 13.300Z" fill="#666"/></svg>
<span class="t" id="t62" style="left:1100.90px;top:629.00px;font-size:12.3px;color:#222;letter-spacing:0.720px;">Webinar</span>
<span class="t" id="t63" style="left:1100.90px;top:648.00px;font-size:11px;color:#4a8fd8;letter-spacing:0.107px;">Работа с кривыми (для</span>
<span class="t" id="t64" style="left:1100.90px;top:665.00px;font-size:11px;color:#4a8fd8;letter-spacing:0.077px;">непрофессиональных графических</span>
<span class="t" id="t65" style="left:1100.90px;top:682.00px;font-size:11px;color:#222;letter-spacing:0.135px;"><span style="color:#4a8fd8">дизайнеров)</span>, автор: Ананд Диксит</span>
<svg class="a" style="left:1039px;top:707px;" width="15" height="16" viewBox="0 0 15 16"><path d="M1 7.800L7.200 1L13.500 7.800M2.500 7.800V15.200H12V7.800" fill="none" stroke="#222" stroke-width="1.300"/><path d="M3.500 4.800V1H6.500" fill="none" stroke="#222" stroke-width="1"/></svg>
<svg class="a" style="left:1274px;top:708px;" width="17" height="14" viewBox="0 0 17 14"><path d="M7 .800L.800 7L7 13.200V9.800H15.700V4.200H7Z" fill="none" stroke="#222" stroke-width="1.300" stroke-linejoin="round"/></svg>
<svg class="a" style="left:1302px;top:708px;" width="17" height="14" viewBox="0 0 17 14"><path d="M10 .800L16.200 7L10 13.200V9.800H1.300V4.200H10Z" fill="none" stroke="#c2c2c2" stroke-width="1.300" stroke-linejoin="round"/></svg>
<div class="a " style="left:1324px;top:141px;width:22px;height:588px;background:#e8e8e8;"></div>
<div class="a " style="left:1324px;top:141px;width:22px;height:101px;background:#a9a9a9;"></div>
<div class="a " style="left:1324px;top:242px;width:22px;height:1px;background:#cfcfcf;"></div>
<div class="a " style="left:1324px;top:344px;width:22px;height:1px;background:#d4d4d4;"></div>
<div class="a " style="left:1324px;top:443px;width:22px;height:286px;background:#f4f4f4;"></div>
<svg class="a" style="left:1328px;top:145px;" width="15" height="15" viewBox="0 0 15 15"><path d="M7.300 0L14.600 3.200L7.300 6.400L0 3.200Z" fill="#222"/><path d="M2.500 5.500V11.500C4 13.500 10.600 13.500 12.100 11.500V5.500L7.300 7.800Z" fill="#222"/><path d="M13.600 3.500V9" stroke="#222" stroke-width="1"/></svg>
<div class="a vt" style="left:1340px;top:167.300px;letter-spacing:-.200px">Обучения</div>
<svg class="a" style="left:1327px;top:250px;" width="16" height="16" viewBox="0 0 16 16"><path d="M6 1L11.500 6.500L6 12L.500 6.500Z" fill="#fff" stroke="#222" stroke-width="1.400"/><path d="M6 .500L12 6.500L10.500 8L4.500 2Z" fill="#222"/><path d="M3 7H9L6 10Z" fill="#d05a1a"/><path d="M10.500 8.500H15.500M10.500 11H15.500M10.500 13.500H15.500" stroke="#222" stroke-width="1.200"/></svg>
<div class="a vt" style="left:1340px;top:270.500px;letter-spacing:-.200px">Свойства</div>
<svg class="a" style="left:1327px;top:347px;" width="16" height="16" viewBox="0 0 16 16"><path d="M8 .800L15.200 5L8 9.200L.800 5Z" fill="#fff" stroke="#222" stroke-width="1.300" stroke-linejoin="round"/><path d="M2.300 8.200L.800 9L8 13.200L15.200 9L13.700 8.200" fill="none" stroke="#222" stroke-width="1.300" stroke-linejoin="round"/></svg>
<div class="a vt" style="left:1340px;top:369.800px;letter-spacing:-.200px">Объекты</div>
<svg class="a" style="left:1329px;top:450px;" width="12" height="12" viewBox="0 0 12 12"><path d="M6 0V12M0 6H12" stroke="#a8a8a8" stroke-width="1.700" fill="none"/></svg>
<div class="a " style="left:1346px;top:117px;width:20px;height:612px;background:#f4f4f4;"></div>
<svg class="a" style="left:1349px;top:120px;" width="15" height="4" viewBox="0 0 15 4"><g fill="#c4c4c4"><rect x="0" y="0.0" width="1" height="1"/><rect x="2" y="0.0" width="1" height="1"/><rect x="4" y="0.0" width="1" height="1"/><rect x="6" y="0.0" width="1" height="1"/><rect x="8" y="0.0" width="1" height="1"/><rect x="10" y="0.0" width="1" height="1"/><rect x="12" y="0.0" width="1" height="1"/><rect x="1" y="1.5" width="1" height="1"/><rect x="3" y="1.5" width="1" height="1"/><rect x="5" y="1.5" width="1" height="1"/><rect x="7" y="1.5" width="1" height="1"/><rect x="9" y="1.5" width="1" height="1"/><rect x="11" y="1.5" width="1" height="1"/><rect x="13" y="1.5" width="1" height="1"/><rect x="0" y="3.0" width="1" height="1"/><rect x="2" y="3.0" width="1" height="1"/><rect x="4" y="3.0" width="1" height="1"/><rect x="6" y="3.0" width="1" height="1"/><rect x="8" y="3.0" width="1" height="1"/><rect x="10" y="3.0" width="1" height="1"/><rect x="12" y="3.0" width="1" height="1"/></g></svg>
<svg class="a" style="left:1354px;top:131px;" width="5" height="9" viewBox="0 0 5 9"><path d="M0 0L5 4.500L0 9Z" fill="#555"/></svg>
<svg class="a" style="left:1349px;top:148px;" width="14" height="14" viewBox="0 0 14 14"><path d="M9.500 1.500C10.800 .200 12.300 .200 13 1C13.800 1.800 13.800 3.200 12.500 4.500L11 6L8 3Z" fill="#c6c6c6"/><path d="M8.300 4L1.500 10.800L.800 13.200L3.200 12.500L10 5.700Z" fill="#d6d6d6" stroke="#c0c0c0" stroke-width=".800"/></svg>
<svg class="a" style="left:1351px;top:169px;" width="10" height="7" viewBox="0 0 10 7"><path d="M1 6L5 2L9 6" fill="none" stroke="#d0d0d0" stroke-width="1.700"/></svg>
<div class="a " style="left:1347px;top:182.0px;width:18px;height:17.0px;background:#fff;border:1px solid #9a9a9a;"></div>
<svg class="a" style="left:1348px;top:183.0px;" width="16" height="15.0" viewBox="0 0 16 15.0"><path d="M1 13.5L15 1.500" stroke="#e03040" stroke-width="1"/></svg>
<div class="a " style="left:1347px;top:199.0px;width:18.5px;height:17.0px;background:#000000;border-top:1px solid rgba(0,0,0,.35);"></div>
<div class="a " style="left:1347px;top:216.0px;width:18.5px;height:17.0px;background:#1a1a1a;border-top:1px solid rgba(0,0,0,.35);"></div>
<div class="a " style="left:1347px;top:233.0px;width:18.5px;height:17.0px;background:#333333;border-top:1px solid rgba(0,0,0,.35);"></div>
<div class="a " style="left:1347px;top:250.0px;width:18.5px;height:17.0px;background:#4d4d4d;border-top:1px solid rgba(0,0,0,.35);"></div>
<div class="a " style="left:1347px;top:267.0px;width:18.5px;height:17.5px;background:#666666;border-top:1px solid rgba(0,0,0,.35);"></div>
<div class="a " style="left:1347px;top:284.5px;width:18.5px;height:17.0px;background:#808080;border-top:1px solid rgba(0,0,0,.35);"></div>
<div class="a " style="left:1347px;top:301.5px;width:18.5px;height:17.0px;background:#999999;border-top:1px solid rgba(0,0,0,.35);"></div>
<div class="a " style="left:1347px;top:318.5px;width:18.5px;height:17.0px;background:#b3b3b3;border-top:1px solid rgba(0,0,0,.35);"></div>
<div class="a " style="left:1347px;top:335.5px;width:18.5px;height:17.0px;background:#cccccc;border-top:1px solid rgba(0,0,0,.35);"></div>
<div class="a " style="left:1347px;top:352.5px;width:18.5px;height:17.0px;background:#e6e6e6;border-top:1px solid rgba(0,0,0,.35);"></div>
<div class="a " style="left:1347px;top:369.5px;width:18.5px;height:17.0px;background:#ffffff;border-top:1px solid rgba(0,0,0,.35);"></div>
<div class="a " style="left:1347px;top:386.5px;width:18.5px;height:17.0px;background:#0000ff;border-top:1px solid rgba(0,0,0,.35);"></div>
<div class="a " style="left:1347px;top:403.5px;width:18.5px;height:17.0px;background:#00ffff;border-top:1px solid rgba(0,0,0,.35);"></div>
<div class="a " style="left:1347px;top:420.5px;width:18.5px;height:17.5px;background:#00ff00;border-top:1px solid rgba(0,0,0,.35);"></div>
<div class="a " style="left:1347px;top:438.0px;width:18.5px;height:17.0px;background:#ffff00;border-top:1px solid rgba(0,0,0,.35);"></div>
<div class="a " style="left:1347px;top:455.0px;width:18.5px;height:17.0px;background:#ff0000;border-top:1px solid rgba(0,0,0,.35);"></div>
<div class="a " style="left:1347px;top:472.0px;width:18.5px;height:17.0px;background:#ff00ff;border-top:1px solid rgba(0,0,0,.35);"></div>
<div class="a " style="left:1347px;top:489.0px;width:18.5px;height:17.0px;background:#9900cc;border-top:1px solid rgba(0,0,0,.35);"></div>
<div class="a " style="left:1347px;top:506.0px;width:18.5px;height:17.0px;background:#ff6600;border-top:1px solid rgba(0,0,0,.35);"></div>
<div class="a " style="left:1347px;top:523.0px;width:18.5px;height:17.0px;background:#ff99cc;border-top:1px solid rgba(0,0,0,.35);"></div>
<div class="a " style="left:1347px;top:540.0px;width:18.5px;height:17.0px;background:#663333;border-top:1px solid rgba(0,0,0,.35);"></div>
<div class="a " style="left:1347px;top:557.0px;width:18.5px;height:17.0px;background:#ccccff;border-top:1px solid rgba(0,0,0,.35);"></div>
<div class="a " style="left:1347px;top:574.0px;width:18.5px;height:17.0px;background:#9999ff;border-top:1px solid rgba(0,0,0,.35);"></div>
<div class="a " style="left:1347px;top:591.0px;width:18.5px;height:17.0px;background:#6699ff;border-top:1px solid rgba(0,0,0,.35);"></div>
<div class="a " style="left:1347px;top:608.0px;width:18.5px;height:17.5px;background:#6666ff;border-top:1px solid rgba(0,0,0,.35);"></div>
<div class="a " style="left:1347px;top:625.5px;width:18.5px;height:17.0px;background:#6666cc;border-top:1px solid rgba(0,0,0,.35);"></div>
<div class="a " style="left:1347px;top:642.5px;width:18.5px;height:17.0px;background:#003399;border-top:1px solid rgba(0,0,0,.35);"></div>
<div class="a " style="left:1347px;top:659.5px;width:18.5px;height:17.0px;background:#000066;border-top:1px solid rgba(0,0,0,.35);"></div>
<div class="a " style="left:1347px;top:676.5px;width:18.5px;height:10.0px;background:#336699;border-top:1px solid rgba(0,0,0,.35);"></div>
<svg class="a" style="left:1351px;top:691px;" width="10" height="7" viewBox="0 0 10 7"><path d="M1 1L5 5L9 1" fill="none" stroke="#b8b8b8" stroke-width="1.700"/></svg>
<svg class="a" style="left:1351px;top:709px;" width="10" height="8" viewBox="0 0 10 8"><path d="M1 .500L4.200 3.800L1 7.200M5.500 .500L8.700 3.800L5.500 7.200" fill="none" stroke="#b0b0b0" stroke-width="1.100"/></svg>
<div class="a " style="left:33px;top:683px;width:995px;height:1px;background:#dcdcdc;"></div>
<div class="a " style="left:33px;top:684px;width:995px;height:23px;background:#f4f4f4;"></div>
<div class="a " style="left:224px;top:684px;width:110px;height:24px;background:#d3d3d3;"></div>
<div class="a " style="left:33px;top:707px;width:995px;height:1px;background:#dedede;"></div>
<div class="a " style="left:444px;top:686px;width:1px;height:20px;background:#e2e2e2;"></div>
<div class="a " style="left:555px;top:686px;width:1px;height:20px;background:#e2e2e2;"></div>
<svg class="a" style="left:39px;top:690px;" width="10" height="10" viewBox="0 0 10 10"><path d="M5 0V10M0 5H10" stroke="#222" stroke-width="1.400" fill="none"/></svg>
<svg class="a" style="left:62px;top:690px;" width="9" height="10" viewBox="0 0 9 10"><path d="M.700 0V10" stroke="#b4b4b4" stroke-width="1.400"/><path d="M9 0V10L2.500 5Z" fill="#b4b4b4"/></svg>
<svg class="a" style="left:86px;top:690px;" width="8" height="10" viewBox="0 0 8 10"><path d="M7.500 0V10L.500 5Z" fill="#b4b4b4"/></svg>
<span class="t" id="t66" style="left:108.00px;top:688.00px;font-size:12px;color:#858585;">1</span>
<span class="t" id="t67" style="left:120.90px;top:688.00px;font-size:12px;color:#858585;letter-spacing:0.481px;">из</span>
<span class="t" id="t68" style="left:139.20px;top:688.00px;font-size:12px;color:#858585;">3</span>
<svg class="a" style="left:163px;top:690px;" width="8" height="10" viewBox="0 0 8 10"><path d="M.500 0V10L7.500 5Z" fill="#222"/></svg>
<svg class="a" style="left:185px;top:690px;" width="10" height="10" viewBox="0 0 10 10"><path d="M0 0V10L6.500 5Z" fill="#222"/><path d="M8.500 0V10" stroke="#222" stroke-width="1.500"/></svg>
<svg class="a" style="left:207.5px;top:690px;" width="10" height="10" viewBox="0 0 10 10"><path d="M5 0V10M0 5H10" stroke="#222" stroke-width="1.400" fill="none"/></svg>
<span class="t" id="t69" style="left:246.80px;top:688.00px;font-size:12px;color:#111;letter-spacing:-0.312px;">Страница 1</span>
<span class="t" id="t70" style="left:357.60px;top:688.00px;font-size:12px;color:#111;letter-spacing:-0.234px;">Страница 2</span>
<span class="t" id="t71" style="left:468.50px;top:688.00px;font-size:12px;color:#111;letter-spacing:-0.234px;">Страница 3</span>
<div class="a " style="left:33px;top:708px;width:995px;height:20px;background:#f4f4f4;"></div>
<svg class="a" style="left:35px;top:711px;" width="4" height="14" viewBox="0 0 4 14"><g fill="#bcbcbc"><rect x="0" y="0.0" width="1" height="1"/><rect x="2" y="0.0" width="1" height="1"/><rect x="2" y="1.5" width="1" height="1"/><rect x="0" y="1.5" width="1" height="1"/><rect x="0" y="3.0" width="1" height="1"/><rect x="2" y="3.0" width="1" height="1"/><rect x="2" y="4.5" width="1" height="1"/><rect x="0" y="4.5" width="1" height="1"/><rect x="0" y="6.0" width="1" height="1"/><rect x="2" y="6.0" width="1" height="1"/><rect x="2" y="7.5" width="1" height="1"/><rect x="0" y="7.5" width="1" height="1"/><rect x="0" y="9.0" width="1" height="1"/><rect x="2" y="9.0" width="1" height="1"/><rect x="2" y="10.5" width="1" height="1"/><rect x="0" y="10.5" width="1" height="1"/><rect x="0" y="12.0" width="1" height="1"/><rect x="2" y="12.0" width="1" height="1"/></g></svg>
<svg class="a" style="left:47px;top:715px;" width="4" height="7" viewBox="0 0 4 7"><path d="M0 0L4 3.500L0 7Z" fill="#555"/></svg>
<svg class="a" style="left:62px;top:711px;" width="14" height="14" viewBox="0 0 14 14"><path d="M9.500 1.500C10.800 .200 12.300 .200 13 1C13.800 1.800 13.800 3.200 12.500 4.500L11 6L8 3Z" fill="#222"/><path d="M7.500 2.500L11.500 6.500" stroke="#222" stroke-width="1.600"/><path d="M8.300 4L1.500 10.800L.800 13.200L3.200 12.500L10 5.700Z" fill="#e07a3a" stroke="#333" stroke-width=".800"/></svg>
<svg class="a" style="left:83px;top:714px;" width="8" height="10" viewBox="0 0 8 10"><path d="M7 .500L1.500 5L7 9.500" fill="none" stroke="#cfcfcf" stroke-width="1.700"/></svg>
<div class="a " style="left:96.0px;top:709.5px;width:17.0px;height:17.5px;background:#fff;border:1px solid #8a8a8a;"></div>
<svg class="a" style="left:97.0px;top:710.5px;" width="15" height="15" viewBox="0 0 15 15"><path d="M1 14L14.500 1.500" stroke="#e03040" stroke-width="1"/></svg>
<div class="a " style="left:113.0px;top:709.5px;width:17.0px;height:17.5px;background:#000000;border:1px solid rgba(0,0,0,.32);"></div>
<div class="a " style="left:130.0px;top:709.5px;width:17.0px;height:17.5px;background:#ffffff;border:1px solid rgba(0,0,0,.32);border-left-width:0;"></div>
<div class="a " style="left:147.0px;top:709.5px;width:17.0px;height:17.5px;background:#dcb27c;border:1px solid rgba(0,0,0,.32);border-left-width:0;"></div>
<div class="a " style="left:164.0px;top:709.5px;width:17.0px;height:17.5px;background:#c9944a;border:1px solid rgba(0,0,0,.32);border-left-width:0;"></div>
<div class="a " style="left:181.0px;top:709.5px;width:17.5px;height:17.5px;background:#e2ca8e;border:1px solid rgba(0,0,0,.32);border-left-width:0;"></div>
<div class="a " style="left:198.5px;top:709.5px;width:17.0px;height:17.5px;background:#eeeec2;border:1px solid rgba(0,0,0,.32);border-left-width:0;"></div>
<div class="a " style="left:215.5px;top:709.5px;width:17.0px;height:17.5px;background:#a8d2b6;border:1px solid rgba(0,0,0,.32);border-left-width:0;"></div>
<div class="a " style="left:232.5px;top:709.5px;width:17.0px;height:17.5px;background:#d8f8f5;border:1px solid rgba(0,0,0,.32);border-left-width:0;"></div>
<div class="a " style="left:249.5px;top:709.5px;width:17.0px;height:17.5px;background:#b0f1ee;border:1px solid rgba(0,0,0,.32);border-left-width:0;"></div>
<div class="a " style="left:266.5px;top:709.5px;width:17.0px;height:17.5px;background:#9ea0f0;border:1px solid rgba(0,0,0,.32);border-left-width:0;"></div>
<div class="a " style="left:283.5px;top:709.5px;width:17.0px;height:17.5px;background:#d8b8ea;border:1px solid rgba(0,0,0,.32);border-left-width:0;"></div>
<div class="a " style="left:300.5px;top:709.5px;width:17.5px;height:17.5px;background:#dcbdec;border:1px solid rgba(0,0,0,.32);border-left-width:0;"></div>
<div class="a " style="left:318.0px;top:709.5px;width:17.0px;height:17.5px;background:#f0608a;border:1px solid rgba(0,0,0,.32);border-left-width:0;"></div>
<svg class="a" style="left:990px;top:714px;" width="9" height="10" viewBox="0 0 9 10"><path d="M1 .500L7 5L1 9.500" fill="none" stroke="#cdcdcd" stroke-width="1.800"/></svg>
<svg class="a" style="left:1008px;top:715px;" width="9" height="7" viewBox="0 0 9 7"><path d="M.800 .500L3.600 3.300L.800 6.200M4.800 .500L7.600 3.300L4.800 6.200" fill="none" stroke="#b0b0b0" stroke-width="1"/></svg>
<div class="a " style="left:0px;top:728px;width:1366px;height:1px;background:#d9d9d9;"></div>
<div class="a " style="left:0px;top:729px;width:1366px;height:36px;background:#f4f4f4;"></div>
<div class="a " style="left:0px;top:765px;width:1366px;height:1px;background:#7c7c7c;"></div>
<div class="a " style="left:0px;top:766px;width:1366px;height:2px;background:#0a0a0a;"></div>
<svg class="a" style="left:11px;top:739.5px;" width="16" height="16" viewBox="0 0 16 16"><path d="M7.300 0H9.700L10.200 2.100L11.700 2.700L13.500 1.600L15.300 3.300L14.200 5.200L14.800 6.700L17 7.200V9.700L14.800 10.200L14.200 11.700L15.300 13.600L13.500 15.300L11.700 14.200L10.200 14.800L9.700 17H7.300L6.800 14.800L5.300 14.200L3.500 15.300L1.700 13.600L2.800 11.700L2.200 10.200L0 9.700V7.200L2.200 6.700L2.800 5.200L1.700 3.300L3.500 1.600L5.300 2.700L6.800 2.100Z" fill="#2b2b2b" transform="scale(.94)"/><circle cx="8" cy="8" r="3.800" fill="#f4f4f4"/></svg>
<svg class="a" style="left:26px;top:754px;" width="4" height="4" viewBox="0 0 4 4"><path d="M4 0V4H0Z" fill="#808080"/></svg>
<span class="t" id="t72" style="left:35.80px;top:740.00px;font-size:12.8px;color:#111;letter-spacing:-0.285px;">Следующий щелчок - перетаскивание/масштабирование; второй щелчок - поворот/наклон; инструмент с двойным щелчком выбирает все объекты; Shift+щелчок - выбор нескольких элементов; Alt+щелчок - цифры</span>
<svg class="a" style="left:1309px;top:739px;" width="17" height="17" viewBox="0 0 17 17"><path d="M7.500 2L13.500 8L7.500 14L1.500 8Z" fill="#fff" stroke="#222" stroke-width="1.400"/><path d="M7.500 1L14.500 8L12.500 10L5.500 3Z" fill="#222"/><path d="M4 8.500H11L7.500 12Z" fill="#d81e28"/><path d="M12.500 11.500L16 15.500H11.500Z" fill="#d81e28"/></svg>
<div class="a " style="left:1327px;top:736px;width:22px;height:21.5px;background:#fff;border:1px solid #a6a6a6;"></div>
<svg class="a" style="left:1328px;top:737px;" width="20" height="19.5" viewBox="0 0 20 19.5"><path d="M.300 19.200L19.700 .300" stroke="#c01c20" stroke-width="1.900"/></svg>
<span class="t" id="t73" style="left:1353.40px;top:739.00px;font-size:12px;color:#111;">Н</span>
<div class="a" style="left:278px;top:43px;width:252px;height:570px;background:#fff;border:1px solid #b4b4b4;box-shadow:1px 1px 2px rgba(0,0,0,.12)"></div>
<div class="a " style="left:279px;top:44px;width:25.8px;height:568px;background:#f4f4f4;"></div>
<svg class="a" style="left:284px;top:49px;" width="16" height="16" viewBox="0 0 16 16"><rect x="0" y="0" width="3" height="3" fill="#cdcdcd"/><rect x="13" y="13" width="3" height="3" fill="#cdcdcd"/></svg>
<span class="t" id="t74" style="left:287.40px;top:49.00px;font-size:12px;color:#c4c4c4;font-family:'Liberation Serif',serif;letter-spacing:1.028px;font-style:italic;">fx</span>
<span class="t" id="t75" style="left:310.50px;top:49.00px;font-size:12px;color:#bdbdbd;letter-spacing:-0.169px;">Эффекты разглаживания</span>
<div class="a " style="left:307px;top:71px;width:220px;height:1px;background:#d7d7d7;"></div>
<span class="t" id="t76" style="left:310.50px;top:78.00px;font-size:12px;color:#111;letter-spacing:-0.115px;">Трех<u>м</u>ерные эффекты</span>
<svg class="a" style="left:517px;top:82px;" width="5" height="8" viewBox="0 0 5 8"><path d="M0 0L4.500 4L0 8Z" fill="#6e6e6e"/></svg>
<span class="t" id="t77" style="left:310.50px;top:100.00px;font-size:12px;color:#111;letter-spacing:0.076px;"><u>Н</u>астройка</span>
<svg class="a" style="left:517px;top:104px;" width="5" height="8" viewBox="0 0 5 8"><path d="M0 0L4.500 4L0 8Z" fill="#6e6e6e"/></svg>
<span class="t" id="t78" style="left:310.50px;top:122.00px;font-size:12px;color:#111;letter-spacing:-0.018px;"><u>Х</u>удожественные мазки</span>
<svg class="a" style="left:517px;top:126px;" width="5" height="8" viewBox="0 0 5 8"><path d="M0 0L4.500 4L0 8Z" fill="#6e6e6e"/></svg>
<span class="t" id="t79" style="left:310.50px;top:144.00px;font-size:12px;color:#111;letter-spacing:-0.070px;">Размы<u>т</u>ость</span>
<svg class="a" style="left:517px;top:148px;" width="5" height="8" viewBox="0 0 5 8"><path d="M0 0L4.500 4L0 8Z" fill="#6e6e6e"/></svg>
<span class="t" id="t80" style="left:310.50px;top:166.00px;font-size:12px;color:#111;letter-spacing:-0.051px;"><u>К</u>амера</span>
<svg class="a" style="left:517px;top:170px;" width="5" height="8" viewBox="0 0 5 8"><path d="M0 0L4.500 4L0 8Z" fill="#6e6e6e"/></svg>
<span class="t" id="t81" style="left:310.50px;top:188.00px;font-size:12px;color:#111;letter-spacing:-0.098px;">Преобра<u>з</u>ование цвета</span>
<svg class="a" style="left:517px;top:192px;" width="5" height="8" viewBox="0 0 5 8"><path d="M0 0L4.500 4L0 8Z" fill="#6e6e6e"/></svg>
<span class="t" id="t82" style="left:310.50px;top:210.00px;font-size:12px;color:#111;letter-spacing:0.263px;">Конт<u>у</u>р</span>
<svg class="a" style="left:517px;top:214px;" width="5" height="8" viewBox="0 0 5 8"><path d="M0 0L4.500 4L0 8Z" fill="#6e6e6e"/></svg>
<span class="t" id="t83" style="left:310.50px;top:232.00px;font-size:12px;color:#111;letter-spacing:0.234px;"><u>К</u>оррекция</span>
<svg class="a" style="left:517px;top:236px;" width="5" height="8" viewBox="0 0 5 8"><path d="M0 0L4.500 4L0 8Z" fill="#6e6e6e"/></svg>
<span class="t" id="t84" style="left:310.50px;top:254.00px;font-size:12px;color:#111;letter-spacing:0.155px;">Т<u>в</u>орческие</span>
<svg class="a" style="left:517px;top:258px;" width="5" height="8" viewBox="0 0 5 8"><path d="M0 0L4.500 4L0 8Z" fill="#6e6e6e"/></svg>
<span class="t" id="t85" style="left:310.50px;top:276.00px;font-size:12px;color:#111;letter-spacing:0.076px;"><u>Н</u>астройка</span>
<svg class="a" style="left:517px;top:280px;" width="5" height="8" viewBox="0 0 5 8"><path d="M0 0L4.500 4L0 8Z" fill="#6e6e6e"/></svg>
<span class="t" id="t86" style="left:310.50px;top:298.00px;font-size:12px;color:#111;letter-spacing:0.008px;"><u>И</u>сказить</span>
<svg class="a" style="left:517px;top:302px;" width="5" height="8" viewBox="0 0 5 8"><path d="M0 0L4.500 4L0 8Z" fill="#6e6e6e"/></svg>
<span class="t" id="t87" style="left:310.50px;top:320.00px;font-size:12px;color:#111;letter-spacing:0.783px;"><u>Ш</u>умы</span>
<svg class="a" style="left:517px;top:324px;" width="5" height="8" viewBox="0 0 5 8"><path d="M0 0L4.500 4L0 8Z" fill="#6e6e6e"/></svg>
<span class="t" id="t88" style="left:310.50px;top:342.00px;font-size:12px;color:#111;letter-spacing:0.136px;"><u>П</u>овышение резкости</span>
<svg class="a" style="left:517px;top:346px;" width="5" height="8" viewBox="0 0 5 8"><path d="M0 0L4.500 4L0 8Z" fill="#6e6e6e"/></svg>
<span class="t" id="t89" style="left:310.50px;top:364.00px;font-size:12px;color:#111;letter-spacing:-0.066px;"><u>Т</u>екстура</span>
<svg class="a" style="left:517px;top:368px;" width="5" height="8" viewBox="0 0 5 8"><path d="M0 0L4.500 4L0 8Z" fill="#6e6e6e"/></svg>
<span class="t" id="t90" style="left:310.50px;top:386.00px;font-size:12px;color:#111;letter-spacing:0.060px;">Преобразова<u>н</u>ие</span>
<svg class="a" style="left:517px;top:390px;" width="5" height="8" viewBox="0 0 5 8"><path d="M0 0L4.500 4L0 8Z" fill="#6e6e6e"/></svg>
<div class="a " style="left:307px;top:408px;width:220px;height:1px;background:#d7d7d7;"></div>
<span class="t" id="t91" style="left:310.50px;top:415.00px;font-size:12px;color:#111;letter-spacing:-0.033px;">Художест<u>в</u>енное оформление</span>
<span class="t" id="t92" style="left:310.50px;top:437.00px;font-size:12px;color:#111;letter-spacing:0.389px;"><u>С</u>кос</span>
<span class="t" id="t93" style="left:310.50px;top:459.00px;font-size:12px;color:#111;letter-spacing:-0.048px;"><u>П</u>еретекание</span>
<span class="t" id="t94" style="left:310.50px;top:481.00px;font-size:12px;color:#111;letter-spacing:0.263px;"><u>К</u>онтур</span>
<span class="t" id="t95" style="left:465.70px;top:481.00px;font-size:12px;color:#111;letter-spacing:0.035px;">Ctrl+F9</span>
<span class="t" id="t96" style="left:310.50px;top:503.00px;font-size:12px;color:#111;letter-spacing:0.254px;"><u>О</u>болочка</span>
<span class="t" id="t97" style="left:465.70px;top:503.00px;font-size:12px;color:#111;letter-spacing:0.035px;">Ctrl+F7</span>
<span class="t" id="t98" style="left:310.50px;top:525.00px;font-size:12px;color:#111;letter-spacing:-0.064px;"><u>В</u>ытягивание</span>
<span class="t" id="t99" style="left:310.50px;top:547.00px;font-size:12px;color:#111;letter-spacing:0.127px;"><u>Л</u>инза</span>
<span class="t" id="t100" style="left:469.40px;top:547.00px;font-size:12px;color:#111;letter-spacing:0.237px;">Alt+F3</span>
<span class="t" id="t101" style="left:310.50px;top:569.00px;font-size:12px;color:#111;letter-spacing:0.163px;">PhotoCocktail</span>
<span class="t" id="t102" style="left:310.50px;top:591.00px;font-size:12px;color:#111;letter-spacing:0.119px;">Pointillizer</span>
</body>
</html>
